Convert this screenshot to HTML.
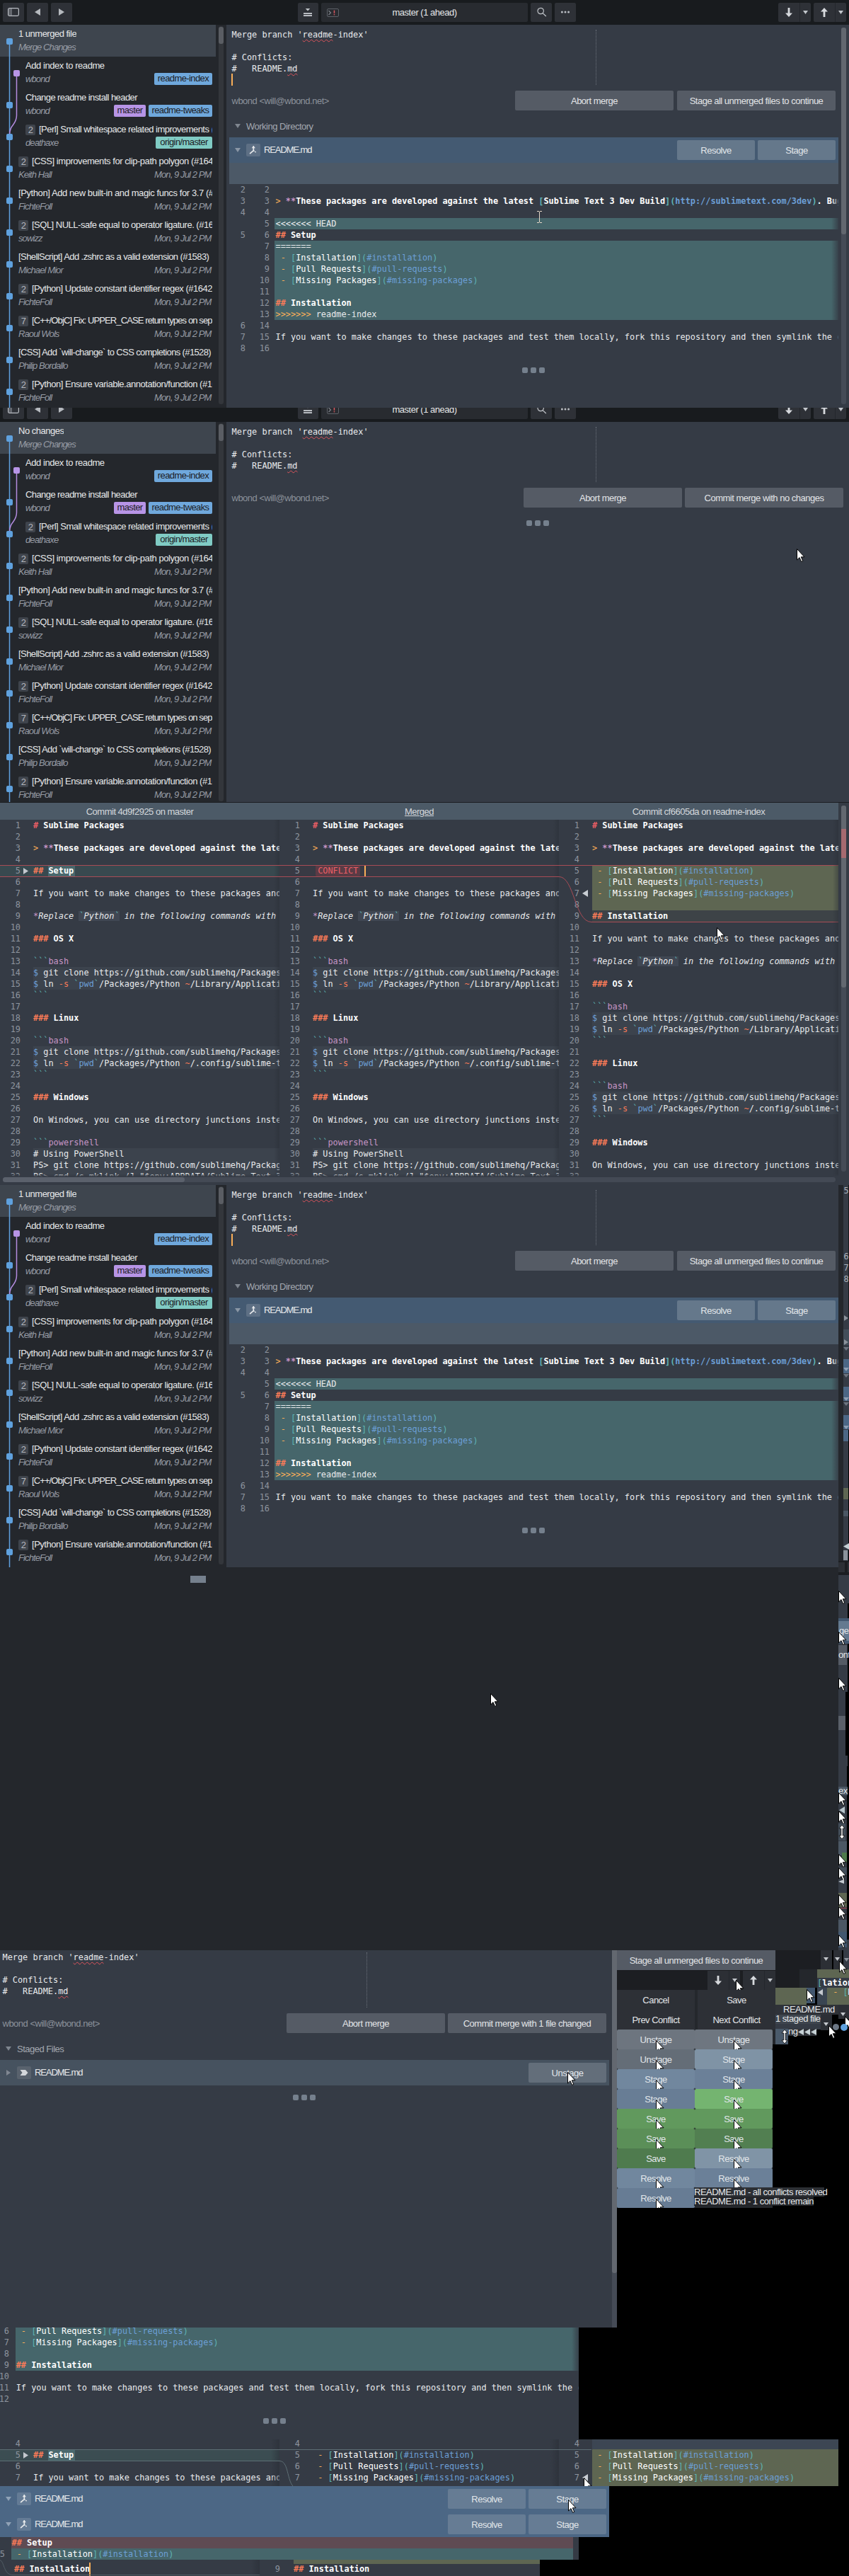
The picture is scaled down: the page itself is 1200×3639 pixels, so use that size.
<!DOCTYPE html><html><head><meta charset="utf-8"><title>Sublime Merge</title><style>
*{box-sizing:border-box;margin:0;padding:0}
html,body{width:1200px;height:3639px;overflow:hidden;background:#24272c}
body{position:relative;font-family:"Liberation Sans",sans-serif;font-size:13px;letter-spacing:-0.5px;color:#e4e6e8}
.a{position:absolute}
.clip{position:absolute;overflow:hidden}
.scr{position:absolute;left:0;width:1200px;height:576px;background:#353b45}
.tb{position:absolute;left:0;top:0;width:1200px;height:35px;background:#181b1e}
.btn{position:absolute;top:4px;height:27px;background:#2e3137;border-radius:2px}
.side{position:absolute;left:0;top:35px;width:316px;height:541px;background:#24272c;overflow:hidden}
.gap{position:absolute;left:316px;top:35px;width:4px;height:541px;background:#24272c}
.row{position:absolute;left:0;width:305px;height:45px}
.row.sel{background:#3e454e}
.t1{position:absolute;top:5px;height:16px;line-height:16px;white-space:nowrap;color:#e6e7e9;overflow:hidden;letter-spacing:-0.5px}
.t2{position:absolute;top:24px;height:16px;line-height:16px;white-space:nowrap;color:#969ba4;font-style:italic;letter-spacing:-0.9px}
.dt{position:absolute;top:24px;right:6.5px;height:16px;line-height:16px;white-space:nowrap;color:#969ba4;font-style:italic;letter-spacing:-0.9px}
.bdg{position:absolute;top:6px;width:14px;height:15px;line-height:15px;text-align:center;background:#3f444c;color:#b4b8be;border-radius:2px;font-size:13px}
.tag{position:absolute;top:23px;height:17px;line-height:16px;padding:0 5px;border-radius:2px;color:#1d2025;white-space:nowrap;font-size:13px;letter-spacing:-0.6px}
.nd{position:absolute;width:9px;height:9px;border-radius:2px}
.mono{font-family:"DejaVu Sans Mono","Liberation Mono",monospace;font-size:11.88px;letter-spacing:0;white-space:pre}
.ln{position:absolute;left:0;height:16px;line-height:16px}
.code{position:absolute;height:16px;line-height:16px;color:#e8eaec}
.num{position:absolute;height:16px;line-height:16px;color:#8e959f;text-align:right}
b{font-weight:bold;color:#fff}
.o{color:#f9ae58}.r{color:#f97b58}.rr{color:#ec5f66}.p{color:#c695c6}.t{color:#5fb4b4}.bl{color:#6c9fd6}.w{color:#fff}
.gbtn{position:absolute;height:28px;line-height:29.5px;text-align:center;background:#555b65;color:#e2e4e7;border-radius:2px;white-space:nowrap;overflow:hidden}
.bbtn{position:absolute;height:28px;line-height:29.5px;overflow:hidden;text-align:center;background:#65788b;color:#e2e6ea;border-radius:2px;white-space:nowrap}
.dot{position:absolute;width:8px;height:8px;border-radius:2px;background:#75808d}
.sq{text-decoration:underline wavy #e0545c;text-decoration-thickness:1px;text-underline-offset:2px}
.hdr{position:absolute;height:24px;line-height:22px;padding-top:2px;text-align:center;color:#d4d8dc;background:#4c5a67;white-space:nowrap}
.cur{position:absolute;width:12px;height:19px}
</style></head><body>
<!--S1-->
<div class="clip" style="left:0;top:0px;width:1200px;height:576px"><div class="scr" style="top:0px"><div class="tb"><div class="btn" style="left:4px;width:30px"><svg class="a" style="left:7px;top:7px" width="16" height="12" viewBox="0 0 16 12"><rect x="1.2" y="1.2" width="4" height="9.6" fill="#5d6168"/><rect x="0.6" y="0.6" width="14.8" height="10.8" rx="1.8" fill="none" stroke="#b9bdc3" stroke-width="1.2"/><path d="M5.2 1V11" stroke="#8d9198" stroke-width="0.8"/></svg></div><div class="btn" style="left:38px;width:30px"><svg class="a" style="left:11px;top:8px" width="8" height="10" viewBox="0 0 8 10"><path d="M8 0V10L0 5Z" fill="#b6babf"/></svg></div><div class="btn" style="left:72px;width:30px"><svg class="a" style="left:11px;top:8px" width="8" height="10" viewBox="0 0 8 10"><path d="M0 0V10L8 5Z" fill="#b6babf"/></svg></div><div class="btn" style="left:421px;width:29px"><svg class="a" style="left:8px;top:7px" width="12" height="13" viewBox="0 0 12 13"><path d="M2.8 0.9H9.2L6 4.6Z" fill="#c0c4c9"/><rect x="0" y="7.1" width="12" height="1.9" fill="#c0c4c9"/><rect x="0" y="10.1" width="12" height="1.9" fill="#c0c4c9"/></svg></div><div class="btn" style="left:454px;width:292px;background:#282b30"><svg class="a" style="left:8px;top:8px" width="17" height="12" viewBox="0 0 17 12"><rect x="0.5" y="0.5" width="16" height="11" rx="1.5" fill="none" stroke="#5d6168"/><path d="M2.5 3L5.5 6L2.5 9" stroke="#80858d" fill="none" stroke-width="1.1"/><rect x="9.7" y="2.6" width="1.5" height="4.2" fill="#d9575f"/><rect x="9.7" y="7.9" width="1.5" height="1.5" fill="#d9575f"/></svg><div class="a" style="left:0;top:0;width:292px;height:27px;line-height:27px;text-align:center;color:#e4e6e8">master (1 ahead)</div></div><div class="btn" style="left:750px;width:30px"><svg class="a" style="left:9px;top:6px" width="14" height="14" viewBox="0 0 14 14"><circle cx="5.2" cy="5.5" r="4.2" fill="none" stroke="#c0c4c9" stroke-width="1.2"/><path d="M8.2 8.6L12.8 13" stroke="#c0c4c9" stroke-width="1.3"/></svg></div><div class="btn" style="left:784px;width:30px"><svg class="a" style="left:8px;top:11px" width="14" height="4" viewBox="0 0 14 4"><circle cx="2.4" cy="1.9" r="1.5" fill="#b9bdc3"/><circle cx="7" cy="1.9" r="1.5" fill="#b9bdc3"/><circle cx="11.6" cy="1.9" r="1.5" fill="#b9bdc3"/></svg></div><div class="btn" style="left:1100px;width:46px"><svg class="a" style="left:10px;top:7px" width="10" height="13" viewBox="0 0 10 13"><path d="M3.6 0H6.4V7.5H10L5 13L0 7.5H3.6Z" fill="#d6d9dd"/></svg><div class="a" style="left:30px;top:0;width:1px;height:27px;background:#24272c"></div><svg class="a" style="left:35px;top:11px" width="7" height="5" viewBox="0 0 7 5"><path d="M0 0H7L3.5 5Z" fill="#c3c7cc"/></svg></div><div class="btn" style="left:1150px;width:46px"><svg class="a" style="left:10px;top:7px" width="10" height="13" viewBox="0 0 10 13"><path d="M3.6 13H6.4V5.5H10L5 0L0 5.5H3.6Z" fill="#d6d9dd"/></svg><div class="a" style="left:30px;top:0;width:1px;height:27px;background:#24272c"></div><svg class="a" style="left:35px;top:11px" width="7" height="5" viewBox="0 0 7 5"><path d="M0 0H7L3.5 5Z" fill="#c3c7cc"/></svg></div></div><div class="side"><div class="row sel" style="top:0"><div class="t1" style="left:26px">1 unmerged file</div><div class="t2" style="left:26px">Merge Changes</div></div><div class="row" style="top:45px"><div class="t1" style="left:36px;width:264px;letter-spacing:-0.44px">Add index to readme</div><div class="t2" style="left:36px">wbond</div><div class="tag" style="left:218px;width:82px;background:#6fa8dc;text-align:center;padding:0">readme-index</div></div><div class="row" style="top:90px"><div class="t1" style="left:36px;width:264px;letter-spacing:-0.58px">Change readme install header</div><div class="t2" style="left:36px">wbond</div><div class="tag" style="left:161px;width:45px;background:#b794e6;text-align:center;padding:0">master</div><div class="tag" style="left:210px;width:90px;background:#6fa8dc;text-align:center;padding:0">readme-tweaks</div></div><div class="row" style="top:135px"><div class="bdg" style="left:36px">2</div><div class="t1" style="left:55px;width:245px;letter-spacing:-0.53px">[Perl] Small whitespace related improvements <span class="bl">(</span></div><div class="t2" style="left:36px">deathaxe</div><div class="tag" style="left:220px;width:80px;background:#80cbc4;text-align:center;padding:0">origin/master</div></div><div class="row" style="top:180px"><div class="bdg" style="left:26px">2</div><div class="t1" style="left:45px;width:255px;letter-spacing:-0.45px">[CSS] improvements for clip-path polygon (#1641)</div><div class="t2" style="left:26px">Keith Hall</div><div class="dt">Mon, 9 Jul 2 PM</div></div><div class="row" style="top:225px"><div class="t1" style="left:26px;width:274px;letter-spacing:-0.41px">[Python] Add new built-in and magic funcs for 3.7 (#1639)</div><div class="t2" style="left:26px">FichteFoll</div><div class="dt">Mon, 9 Jul 2 PM</div></div><div class="row" style="top:270px"><div class="bdg" style="left:26px">2</div><div class="t1" style="left:45px;width:255px;letter-spacing:-0.5px">[SQL] NULL-safe equal to operator ligature. (#1637)</div><div class="t2" style="left:26px">sowizz</div><div class="dt">Mon, 9 Jul 2 PM</div></div><div class="row" style="top:315px"><div class="t1" style="left:26px;width:274px;letter-spacing:-0.577px">[ShellScript] Add .zshrc as a valid extension (#1583)</div><div class="t2" style="left:26px">Michael Mior</div><div class="dt">Mon, 9 Jul 2 PM</div></div><div class="row" style="top:360px"><div class="bdg" style="left:26px">2</div><div class="t1" style="left:45px;width:255px;letter-spacing:-0.5px">[Python] Update constant identifier regex (#1642)</div><div class="t2" style="left:26px">FichteFoll</div><div class="dt">Mon, 9 Jul 2 PM</div></div><div class="row" style="top:405px"><div class="bdg" style="left:26px">7</div><div class="t1" style="left:45px;width:255px;letter-spacing:-0.89px">[C++/ObjC] Fix: UPPER_CASE return types on separate</div><div class="t2" style="left:26px">Raoul Wols</div><div class="dt">Mon, 9 Jul 2 PM</div></div><div class="row" style="top:450px"><div class="t1" style="left:26px;width:274px;letter-spacing:-0.63px">[CSS] Add `will-change` to CSS completions (#1528)</div><div class="t2" style="left:26px">Philip Bordallo</div><div class="dt">Mon, 9 Jul 2 PM</div></div><div class="row" style="top:495px"><div class="bdg" style="left:26px">2</div><div class="t1" style="left:45px;width:255px;letter-spacing:-0.48px">[Python] Ensure variable.annotation/function (#1632)</div><div class="t2" style="left:26px">FichteFoll</div><div class="dt">Mon, 9 Jul 2 PM</div></div><svg class="a" style="left:0;top:0" width="40" height="541" viewBox="0 0 40 541"><path d="M13.5 24V541" stroke="#5fa1de" stroke-width="1.5" fill="none"/><path d="M23.5 69V128C23.5 142 13.5 140 13.5 156" stroke="#b48ce0" stroke-width="1.5" fill="none"/><rect x="9" y="19" width="9" height="9" rx="2" fill="#5fa1de"/><rect x="19" y="64" width="9" height="9" rx="2" fill="#b794e6"/><rect x="9" y="109" width="9" height="9" rx="2" fill="#5fa1de"/><rect x="9" y="154" width="9" height="9" rx="2" fill="#5fa1de"/><rect x="9" y="199" width="9" height="9" rx="2" fill="#5fa1de"/><rect x="9" y="244" width="9" height="9" rx="2" fill="#5fa1de"/><rect x="9" y="289" width="9" height="9" rx="2" fill="#5fa1de"/><rect x="9" y="334" width="9" height="9" rx="2" fill="#5fa1de"/><rect x="9" y="379" width="9" height="9" rx="2" fill="#5fa1de"/><rect x="9" y="424" width="9" height="9" rx="2" fill="#5fa1de"/><rect x="9" y="469" width="9" height="9" rx="2" fill="#5fa1de"/><rect x="9" y="514" width="9" height="9" rx="2" fill="#5fa1de"/></svg><div class="a" style="left:309px;top:2px;width:7px;height:534px;background:#33363b;border-radius:3px"></div><div class="a" style="left:309px;top:3px;width:7px;height:24px;background:#5a5d63;border-radius:3px"></div></div><div class="gap"></div><div class="a mono" style="left:327.5px;top:41px;line-height:16px;color:#e8eaec">Merge branch '<span class="sq">readme</span>-index'

# Conflicts:
#   README.<span class="sq">md</span></div><div class="a" style="left:842px;top:42px;width:0;height:78px;border-left:1px dotted #6a707a"></div><div class="a" style="left:327px;top:104px;width:2px;height:17px;background:#f9ae58"></div><div class="a" style="left:327.5px;top:135px;line-height:16px;color:#8b919a">wbond &lt;will@wbond.net&gt;</div><div class="gbtn" style="left:728px;top:128px;width:224px">Abort merge</div><div class="gbtn" style="left:957px;top:128px;width:224px">Stage all unmerged files to continue</div><svg class="a" style="left:332px;top:175px" width="8" height="6" viewBox="0 0 8 6"><path d="M0 0H8L4 6Z" fill="#7f868f"/></svg><div class="a" style="left:348px;top:171px;line-height:16px;color:#a3a8b0">Working Directory</div><div class="a" style="left:324px;top:194px;width:861px;height:36px;background:#445a72"></div><svg class="a" style="left:332px;top:209px" width="8" height="6" viewBox="0 0 8 6"><path d="M0 0H8L4 6Z" fill="#8a97a6"/></svg><svg class="a" style="left:348px;top:203px" width="20" height="18" viewBox="0 0 20 18"><rect width="20" height="18" rx="2" fill="#5d6f84"/><path d="M10.3 3.8V9.6L5.6 13.6" stroke="#e8eaec" stroke-width="1.7" fill="none" stroke-linecap="round" stroke-linejoin="round"/><path d="M10.3 9.6L14.2 12.6" stroke="#e8eaec" stroke-width="1.5" fill="none" stroke-dasharray="1.6 1"/><path d="M7.7 6.2L10.3 3L12.9 6.2Z" fill="#e8eaec"/></svg><div class="a" style="left:373px;top:204px;line-height:16px;color:#e6e8ea;letter-spacing:-1.1px">README.md</div><div class="bbtn" style="left:957px;top:198px;width:110px">Resolve</div><div class="bbtn" style="left:1071px;top:198px;width:110px">Stage</div><div class="a" style="left:324px;top:230px;width:861px;height:30px;background:#4c5967"></div><div class="clip mono" style="left:324px;top:260px;width:861px;height:240px"><div class="num" style="left:0;width:23px;top:0px">2</div><div class="num" style="left:30px;width:27px;top:0px">2</div><div class="num" style="left:0;width:23px;top:16px">3</div><div class="num" style="left:30px;width:27px;top:16px">3</div><div class="code" style="left:65.5px;top:16px"><span class="o">&gt;</span> <span class="p" style="font-weight:bold">**</span><b>These packages are developed against the latest <span class="t">[</span>Sublime Text 3 Dev Build<span class="t">](</span><span class="bl">http://sublimetext.com/3dev</span><span class="t">)</span>. Bugs should be</b></div><div class="num" style="left:0;width:23px;top:32px">4</div><div class="num" style="left:30px;width:27px;top:32px">4</div><div class="a" style="left:64px;top:48px;width:797px;height:16px;background:#46666b"></div><div class="num" style="left:30px;width:27px;top:48px">5</div><div class="code" style="left:65.5px;top:48px">&lt;&lt;&lt;&lt;&lt;&lt;&lt; HEAD</div><div class="num" style="left:0;width:23px;top:64px">5</div><div class="num" style="left:30px;width:27px;top:64px">6</div><div class="code" style="left:65.5px;top:64px"><span class="r" style="font-weight:bold">##</span> <b>Setup</b></div><div class="a" style="left:64px;top:80px;width:797px;height:16px;background:#46666b"></div><div class="num" style="left:30px;width:27px;top:80px">7</div><div class="code" style="left:65.5px;top:80px">=======</div><div class="a" style="left:64px;top:96px;width:797px;height:16px;background:#46666b"></div><div class="num" style="left:30px;width:27px;top:96px">8</div><div class="code" style="left:65.5px;top:96px"> <span class="o">-</span> <span class="t">[</span><span class="w">Installation</span><span class="t">](</span><span class="bl">#installation</span><span class="t">)</span></div><div class="a" style="left:64px;top:112px;width:797px;height:16px;background:#46666b"></div><div class="num" style="left:30px;width:27px;top:112px">9</div><div class="code" style="left:65.5px;top:112px"> <span class="o">-</span> <span class="t">[</span><span class="w">Pull Requests</span><span class="t">](</span><span class="bl">#pull-requests</span><span class="t">)</span></div><div class="a" style="left:64px;top:128px;width:797px;height:16px;background:#46666b"></div><div class="num" style="left:30px;width:27px;top:128px">10</div><div class="code" style="left:65.5px;top:128px"> <span class="o">-</span> <span class="t">[</span><span class="w">Missing Packages</span><span class="t">](</span><span class="bl">#missing-packages</span><span class="t">)</span></div><div class="a" style="left:64px;top:144px;width:797px;height:16px;background:#46666b"></div><div class="num" style="left:30px;width:27px;top:144px">11</div><div class="a" style="left:64px;top:160px;width:797px;height:16px;background:#46666b"></div><div class="num" style="left:30px;width:27px;top:160px">12</div><div class="code" style="left:65.5px;top:160px"><span class="r" style="font-weight:bold">##</span> <b>Installation</b></div><div class="a" style="left:64px;top:176px;width:797px;height:16px;background:#46666b"></div><div class="num" style="left:30px;width:27px;top:176px">13</div><div class="code" style="left:65.5px;top:176px"><span class="o">&gt;&gt;&gt;&gt;&gt;&gt;&gt;</span> readme-index</div><div class="num" style="left:0;width:23px;top:192px">6</div><div class="num" style="left:30px;width:27px;top:192px">14</div><div class="num" style="left:0;width:23px;top:208px">7</div><div class="num" style="left:30px;width:27px;top:208px">15</div><div class="code" style="left:65.5px;top:208px">If you want to make changes to these packages and test them locally, fork this repository and then symlink the changes</div><div class="num" style="left:0;width:23px;top:224px">8</div><div class="num" style="left:30px;width:27px;top:224px">16</div><div class="a" style="right:0;top:0;width:10px;height:240px;background:linear-gradient(to right,rgba(53,59,69,0),rgba(53,59,69,.85))"></div></div><div class="dot" style="left:738px;top:519px"></div><div class="dot" style="left:750px;top:519px"></div><div class="dot" style="left:762px;top:519px"></div><div class="a" style="left:1189px;top:39px;width:7px;height:532px;background:#454b56;border-radius:3px"></div><div class="a" style="left:1189px;top:39px;width:7px;height:292px;background:#62676f;border-radius:3px"></div></div></div>
<svg class="a" style="left:759px;top:298px" width="7" height="17" viewBox="0 0 7 17"><path d="M0 .5H3M4 .5H7M3.5 1V16M0 16.5H3M4 16.5H7" stroke="#e6d8c8" stroke-width="1" fill="none"/></svg>
<!--S2-->
<div class="clip" style="left:0;top:576px;width:1200px;height:557px"><div class="scr" style="top:-15px"><div class="tb"><div class="btn" style="left:4px;width:30px"><svg class="a" style="left:7px;top:7px" width="16" height="12" viewBox="0 0 16 12"><rect x="1.2" y="1.2" width="4" height="9.6" fill="#5d6168"/><rect x="0.6" y="0.6" width="14.8" height="10.8" rx="1.8" fill="none" stroke="#b9bdc3" stroke-width="1.2"/><path d="M5.2 1V11" stroke="#8d9198" stroke-width="0.8"/></svg></div><div class="btn" style="left:38px;width:30px"><svg class="a" style="left:11px;top:8px" width="8" height="10" viewBox="0 0 8 10"><path d="M8 0V10L0 5Z" fill="#b6babf"/></svg></div><div class="btn" style="left:72px;width:30px"><svg class="a" style="left:11px;top:8px" width="8" height="10" viewBox="0 0 8 10"><path d="M0 0V10L8 5Z" fill="#b6babf"/></svg></div><div class="btn" style="left:421px;width:29px"><svg class="a" style="left:8px;top:7px" width="12" height="13" viewBox="0 0 12 13"><path d="M2.8 0.9H9.2L6 4.6Z" fill="#c0c4c9"/><rect x="0" y="7.1" width="12" height="1.9" fill="#c0c4c9"/><rect x="0" y="10.1" width="12" height="1.9" fill="#c0c4c9"/></svg></div><div class="btn" style="left:454px;width:292px;background:#282b30"><svg class="a" style="left:8px;top:8px" width="17" height="12" viewBox="0 0 17 12"><rect x="0.5" y="0.5" width="16" height="11" rx="1.5" fill="none" stroke="#5d6168"/><path d="M2.5 3L5.5 6L2.5 9" stroke="#80858d" fill="none" stroke-width="1.1"/><rect x="9.7" y="2.6" width="1.5" height="4.2" fill="#d9575f"/><rect x="9.7" y="7.9" width="1.5" height="1.5" fill="#d9575f"/></svg><div class="a" style="left:0;top:0;width:292px;height:27px;line-height:27px;text-align:center;color:#e4e6e8">master (1 ahead)</div></div><div class="btn" style="left:750px;width:30px"><svg class="a" style="left:9px;top:6px" width="14" height="14" viewBox="0 0 14 14"><circle cx="5.2" cy="5.5" r="4.2" fill="none" stroke="#c0c4c9" stroke-width="1.2"/><path d="M8.2 8.6L12.8 13" stroke="#c0c4c9" stroke-width="1.3"/></svg></div><div class="btn" style="left:784px;width:30px"><svg class="a" style="left:8px;top:11px" width="14" height="4" viewBox="0 0 14 4"><circle cx="2.4" cy="1.9" r="1.5" fill="#b9bdc3"/><circle cx="7" cy="1.9" r="1.5" fill="#b9bdc3"/><circle cx="11.6" cy="1.9" r="1.5" fill="#b9bdc3"/></svg></div><div class="btn" style="left:1100px;width:46px"><svg class="a" style="left:10px;top:7px" width="10" height="13" viewBox="0 0 10 13"><path d="M3.6 0H6.4V7.5H10L5 13L0 7.5H3.6Z" fill="#d6d9dd"/></svg><div class="a" style="left:30px;top:0;width:1px;height:27px;background:#24272c"></div><svg class="a" style="left:35px;top:11px" width="7" height="5" viewBox="0 0 7 5"><path d="M0 0H7L3.5 5Z" fill="#c3c7cc"/></svg></div><div class="btn" style="left:1150px;width:46px"><svg class="a" style="left:10px;top:7px" width="10" height="13" viewBox="0 0 10 13"><path d="M3.6 13H6.4V5.5H10L5 0L0 5.5H3.6Z" fill="#d6d9dd"/></svg><div class="a" style="left:30px;top:0;width:1px;height:27px;background:#24272c"></div><svg class="a" style="left:35px;top:11px" width="7" height="5" viewBox="0 0 7 5"><path d="M0 0H7L3.5 5Z" fill="#c3c7cc"/></svg></div></div><div class="side"><div class="row sel" style="top:0"><div class="t1" style="left:26px">No changes</div><div class="t2" style="left:26px">Merge Changes</div></div><div class="row" style="top:45px"><div class="t1" style="left:36px;width:264px;letter-spacing:-0.44px">Add index to readme</div><div class="t2" style="left:36px">wbond</div><div class="tag" style="left:218px;width:82px;background:#6fa8dc;text-align:center;padding:0">readme-index</div></div><div class="row" style="top:90px"><div class="t1" style="left:36px;width:264px;letter-spacing:-0.58px">Change readme install header</div><div class="t2" style="left:36px">wbond</div><div class="tag" style="left:161px;width:45px;background:#b794e6;text-align:center;padding:0">master</div><div class="tag" style="left:210px;width:90px;background:#6fa8dc;text-align:center;padding:0">readme-tweaks</div></div><div class="row" style="top:135px"><div class="bdg" style="left:36px">2</div><div class="t1" style="left:55px;width:245px;letter-spacing:-0.53px">[Perl] Small whitespace related improvements <span class="bl">(</span></div><div class="t2" style="left:36px">deathaxe</div><div class="tag" style="left:220px;width:80px;background:#80cbc4;text-align:center;padding:0">origin/master</div></div><div class="row" style="top:180px"><div class="bdg" style="left:26px">2</div><div class="t1" style="left:45px;width:255px;letter-spacing:-0.45px">[CSS] improvements for clip-path polygon (#1641)</div><div class="t2" style="left:26px">Keith Hall</div><div class="dt">Mon, 9 Jul 2 PM</div></div><div class="row" style="top:225px"><div class="t1" style="left:26px;width:274px;letter-spacing:-0.41px">[Python] Add new built-in and magic funcs for 3.7 (#1639)</div><div class="t2" style="left:26px">FichteFoll</div><div class="dt">Mon, 9 Jul 2 PM</div></div><div class="row" style="top:270px"><div class="bdg" style="left:26px">2</div><div class="t1" style="left:45px;width:255px;letter-spacing:-0.5px">[SQL] NULL-safe equal to operator ligature. (#1637)</div><div class="t2" style="left:26px">sowizz</div><div class="dt">Mon, 9 Jul 2 PM</div></div><div class="row" style="top:315px"><div class="t1" style="left:26px;width:274px;letter-spacing:-0.577px">[ShellScript] Add .zshrc as a valid extension (#1583)</div><div class="t2" style="left:26px">Michael Mior</div><div class="dt">Mon, 9 Jul 2 PM</div></div><div class="row" style="top:360px"><div class="bdg" style="left:26px">2</div><div class="t1" style="left:45px;width:255px;letter-spacing:-0.5px">[Python] Update constant identifier regex (#1642)</div><div class="t2" style="left:26px">FichteFoll</div><div class="dt">Mon, 9 Jul 2 PM</div></div><div class="row" style="top:405px"><div class="bdg" style="left:26px">7</div><div class="t1" style="left:45px;width:255px;letter-spacing:-0.89px">[C++/ObjC] Fix: UPPER_CASE return types on separate</div><div class="t2" style="left:26px">Raoul Wols</div><div class="dt">Mon, 9 Jul 2 PM</div></div><div class="row" style="top:450px"><div class="t1" style="left:26px;width:274px;letter-spacing:-0.63px">[CSS] Add `will-change` to CSS completions (#1528)</div><div class="t2" style="left:26px">Philip Bordallo</div><div class="dt">Mon, 9 Jul 2 PM</div></div><div class="row" style="top:495px"><div class="bdg" style="left:26px">2</div><div class="t1" style="left:45px;width:255px;letter-spacing:-0.48px">[Python] Ensure variable.annotation/function (#1632)</div><div class="t2" style="left:26px">FichteFoll</div><div class="dt">Mon, 9 Jul 2 PM</div></div><svg class="a" style="left:0;top:0" width="40" height="541" viewBox="0 0 40 541"><path d="M13.5 24V541" stroke="#5fa1de" stroke-width="1.5" fill="none"/><path d="M23.5 69V128C23.5 142 13.5 140 13.5 156" stroke="#b48ce0" stroke-width="1.5" fill="none"/><rect x="9" y="19" width="9" height="9" rx="2" fill="#5fa1de"/><rect x="19" y="64" width="9" height="9" rx="2" fill="#b794e6"/><rect x="9" y="109" width="9" height="9" rx="2" fill="#5fa1de"/><rect x="9" y="154" width="9" height="9" rx="2" fill="#5fa1de"/><rect x="9" y="199" width="9" height="9" rx="2" fill="#5fa1de"/><rect x="9" y="244" width="9" height="9" rx="2" fill="#5fa1de"/><rect x="9" y="289" width="9" height="9" rx="2" fill="#5fa1de"/><rect x="9" y="334" width="9" height="9" rx="2" fill="#5fa1de"/><rect x="9" y="379" width="9" height="9" rx="2" fill="#5fa1de"/><rect x="9" y="424" width="9" height="9" rx="2" fill="#5fa1de"/><rect x="9" y="469" width="9" height="9" rx="2" fill="#5fa1de"/><rect x="9" y="514" width="9" height="9" rx="2" fill="#5fa1de"/></svg><div class="a" style="left:309px;top:2px;width:7px;height:534px;background:#33363b;border-radius:3px"></div><div class="a" style="left:309px;top:3px;width:7px;height:24px;background:#5a5d63;border-radius:3px"></div></div><div class="gap"></div><div class="a mono" style="left:327.5px;top:41px;line-height:16px;color:#e8eaec">Merge branch '<span class="sq">readme</span>-index'

# Conflicts:
#   README.<span class="sq">md</span></div><div class="a" style="left:842px;top:42px;width:0;height:78px;border-left:1px dotted #6a707a"></div><div class="a" style="left:327.5px;top:135px;line-height:16px;color:#8b919a">wbond &lt;will@wbond.net&gt;</div><div class="gbtn" style="left:740px;top:128px;width:224px">Abort merge</div><div class="gbtn" style="left:968px;top:128px;width:224px">Commit merge with no changes</div><div class="dot" style="left:744px;top:174px"></div><div class="dot" style="left:756px;top:174px"></div><div class="dot" style="left:768px;top:174px"></div><svg class="cur" style="left:1126px;top:214px" viewBox="0 0 12 19"><path d="M0.5 0.5 L0.5 16 L4 12.6 L6.6 18.4 L8.8 17.4 L6.3 11.8 L11 11.8 Z" fill="#fff" stroke="#000" stroke-width="1"/></svg></div></div>
<div class="a" style="left:0;top:1133px;width:1200px;height:1px;background:#1b1d21"></div>
<!--S3-->
<div class="clip" style="left:0;top:1134px;width:1200px;height:540px;background:#353b45"><div class="hdr" style="left:0;top:0;width:1185px"></div><div class="hdr" style="left:0;top:0;width:395px;background:none">Commit 4d9f2925 on master</div><div class="hdr" style="left:395px;top:0;width:395px;background:none;text-decoration:underline">Merged</div><div class="hdr" style="left:790px;top:0;width:395px;background:none">Commit cf6605da on readme-index</div><div class="clip mono" style="left:0px;top:24px;width:395px;height:516px"><div class="a" style="left:0;top:64px;width:395px;height:16px;background:#38494f"></div><div class="a" style="left:68px;top:64px;width:38px;height:16px;background:#4a686d"></div><svg class="a" style="left:33px;top:68px" width="7" height="9" viewBox="0 0 7 9"><path d="M0 0V9L7 4.5Z" fill="#c3c8ce"/></svg><div class="num" style="left:0;width:29px;top:0px">1</div><div class="code" style="left:47px;top:0px"><span class="rr" style="font-weight:bold">#</span> <b>Sublime Packages</b></div><div class="num" style="left:0;width:29px;top:16px">2</div><div class="num" style="left:0;width:29px;top:32px">3</div><div class="code" style="left:47px;top:32px"><span class="o">&gt;</span> <span class="p" style="font-weight:bold">**</span><b>These packages are developed against the latest <span class="t">[</span>Sublime Text 3 Dev Build<span class="t">](</span><span class="bl">http://sublimetext.com/3dev</span><span class="t">)</span>. Bugs should be</b></div><div class="num" style="left:0;width:29px;top:48px">4</div><div class="num" style="left:0;width:29px;top:64px">5</div><div class="code" style="left:47px;top:64px"><span class="r" style="font-weight:bold">##</span> <b>Setup</b></div><div class="num" style="left:0;width:29px;top:80px">6</div><div class="num" style="left:0;width:29px;top:96px">7</div><div class="code" style="left:47px;top:96px">If you want to make changes to these packages and test them locally, fork this repository and then symlink the changes</div><div class="num" style="left:0;width:29px;top:112px">8</div><div class="num" style="left:0;width:29px;top:128px">9</div><div class="code" style="left:47px;top:128px"><i><span class="p">*</span>Replace <span style="background:#404753"><span class="t">`</span>Python<span class="t">`</span></span> in the following commands with the name</i></div><div class="num" style="left:0;width:29px;top:144px">10</div><div class="num" style="left:0;width:29px;top:160px">11</div><div class="code" style="left:47px;top:160px"><span class="r" style="font-weight:bold">###</span> <b>OS X</b></div><div class="num" style="left:0;width:29px;top:176px">12</div><div class="num" style="left:0;width:29px;top:192px">13</div><div class="code" style="left:47px;top:192px"><span class="t">```</span><span class="p">bash</span></div><div class="a" style="left:47px;top:208px;width:348px;height:16px;background:#3c434d"></div><div class="num" style="left:0;width:29px;top:208px">14</div><div class="code" style="left:47px;top:208px"><span class="bl">$</span> git clone https://github.com/sublimehq/Packages</div><div class="a" style="left:47px;top:224px;width:348px;height:16px;background:#3c434d"></div><div class="num" style="left:0;width:29px;top:224px">15</div><div class="code" style="left:47px;top:224px"><span class="bl">$</span> ln <span class="r">-s</span> <span class="t">`</span><span class="bl">pwd</span><span class="t">`</span>/Packages/Python <span class="r">~</span>/Library/Application\ Support/Sublime</div><div class="num" style="left:0;width:29px;top:240px">16</div><div class="code" style="left:47px;top:240px"><span class="t">```</span><span class="p"></span></div><div class="num" style="left:0;width:29px;top:256px">17</div><div class="num" style="left:0;width:29px;top:272px">18</div><div class="code" style="left:47px;top:272px"><span class="r" style="font-weight:bold">###</span> <b>Linux</b></div><div class="num" style="left:0;width:29px;top:288px">19</div><div class="num" style="left:0;width:29px;top:304px">20</div><div class="code" style="left:47px;top:304px"><span class="t">```</span><span class="p">bash</span></div><div class="a" style="left:47px;top:320px;width:348px;height:16px;background:#3c434d"></div><div class="num" style="left:0;width:29px;top:320px">21</div><div class="code" style="left:47px;top:320px"><span class="bl">$</span> git clone https://github.com/sublimehq/Packages</div><div class="a" style="left:47px;top:336px;width:348px;height:16px;background:#3c434d"></div><div class="num" style="left:0;width:29px;top:336px">22</div><div class="code" style="left:47px;top:336px"><span class="bl">$</span> ln <span class="r">-s</span> <span class="t">`</span><span class="bl">pwd</span><span class="t">`</span>/Packages/Python <span class="r">~</span>/.config/sublime-text-3/Packages</div><div class="num" style="left:0;width:29px;top:352px">23</div><div class="code" style="left:47px;top:352px"><span class="t">```</span><span class="p"></span></div><div class="num" style="left:0;width:29px;top:368px">24</div><div class="num" style="left:0;width:29px;top:384px">25</div><div class="code" style="left:47px;top:384px"><span class="r" style="font-weight:bold">###</span> <b>Windows</b></div><div class="num" style="left:0;width:29px;top:400px">26</div><div class="num" style="left:0;width:29px;top:416px">27</div><div class="code" style="left:47px;top:416px">On Windows, you can use directory junctions instead of symlinks</div><div class="num" style="left:0;width:29px;top:432px">28</div><div class="num" style="left:0;width:29px;top:448px">29</div><div class="code" style="left:47px;top:448px"><span class="t">```</span><span class="p">powershell</span></div><div class="a" style="left:47px;top:464px;width:348px;height:16px;background:#3c434d"></div><div class="num" style="left:0;width:29px;top:464px">30</div><div class="code" style="left:47px;top:464px"># Using PowerShell</div><div class="a" style="left:47px;top:480px;width:348px;height:16px;background:#3c434d"></div><div class="num" style="left:0;width:29px;top:480px">31</div><div class="code" style="left:47px;top:480px">PS&gt; git clone https://github.com/sublimehq/Packages</div><div class="a" style="left:47px;top:496px;width:348px;height:16px;background:#3c434d"></div><div class="num" style="left:0;width:29px;top:496px">32</div><div class="code" style="left:47px;top:496px">PS&gt; cmd /c mklink /J "$env:APPDATA/Sublime Text 3/Packages/Python"</div><div class="a" style="left:47px;top:512px;width:348px;height:16px;background:#3c434d"></div><div class="num" style="left:0;width:29px;top:512px">33</div></div><div class="clip mono" style="left:395px;top:24px;width:395px;height:516px"><div class="a" style="left:0;top:64px;width:395px;height:16px;background:#393a44"></div><div class="a" style="left:119.5px;top:64px;width:2px;height:16px;background:#f9ae58"></div><div class="num" style="left:0;width:29px;top:0px">1</div><div class="code" style="left:47px;top:0px"><span class="rr" style="font-weight:bold">#</span> <b>Sublime Packages</b></div><div class="num" style="left:0;width:29px;top:16px">2</div><div class="num" style="left:0;width:29px;top:32px">3</div><div class="code" style="left:47px;top:32px"><span class="o">&gt;</span> <span class="p" style="font-weight:bold">**</span><b>These packages are developed against the latest <span class="t">[</span>Sublime Text 3 Dev Build<span class="t">](</span><span class="bl">http://sublimetext.com/3dev</span><span class="t">)</span>. Bugs should be</b></div><div class="num" style="left:0;width:29px;top:48px">4</div><div class="num" style="left:0;width:29px;top:64px">5</div><div class="code" style="left:47px;top:64px"> <span class="rr" style="background:#5b3b45;padding:1px 3px;margin:0 -3px;border-radius:2px">CONFLICT</span></div><div class="num" style="left:0;width:29px;top:80px">6</div><div class="num" style="left:0;width:29px;top:96px">7</div><div class="code" style="left:47px;top:96px">If you want to make changes to these packages and test them locally, fork this repository and then symlink the changes</div><div class="num" style="left:0;width:29px;top:112px">8</div><div class="num" style="left:0;width:29px;top:128px">9</div><div class="code" style="left:47px;top:128px"><i><span class="p">*</span>Replace <span style="background:#404753"><span class="t">`</span>Python<span class="t">`</span></span> in the following commands with the name</i></div><div class="num" style="left:0;width:29px;top:144px">10</div><div class="num" style="left:0;width:29px;top:160px">11</div><div class="code" style="left:47px;top:160px"><span class="r" style="font-weight:bold">###</span> <b>OS X</b></div><div class="num" style="left:0;width:29px;top:176px">12</div><div class="num" style="left:0;width:29px;top:192px">13</div><div class="code" style="left:47px;top:192px"><span class="t">```</span><span class="p">bash</span></div><div class="a" style="left:47px;top:208px;width:348px;height:16px;background:#3c434d"></div><div class="num" style="left:0;width:29px;top:208px">14</div><div class="code" style="left:47px;top:208px"><span class="bl">$</span> git clone https://github.com/sublimehq/Packages</div><div class="a" style="left:47px;top:224px;width:348px;height:16px;background:#3c434d"></div><div class="num" style="left:0;width:29px;top:224px">15</div><div class="code" style="left:47px;top:224px"><span class="bl">$</span> ln <span class="r">-s</span> <span class="t">`</span><span class="bl">pwd</span><span class="t">`</span>/Packages/Python <span class="r">~</span>/Library/Application\ Support/Sublime</div><div class="num" style="left:0;width:29px;top:240px">16</div><div class="code" style="left:47px;top:240px"><span class="t">```</span><span class="p"></span></div><div class="num" style="left:0;width:29px;top:256px">17</div><div class="num" style="left:0;width:29px;top:272px">18</div><div class="code" style="left:47px;top:272px"><span class="r" style="font-weight:bold">###</span> <b>Linux</b></div><div class="num" style="left:0;width:29px;top:288px">19</div><div class="num" style="left:0;width:29px;top:304px">20</div><div class="code" style="left:47px;top:304px"><span class="t">```</span><span class="p">bash</span></div><div class="a" style="left:47px;top:320px;width:348px;height:16px;background:#3c434d"></div><div class="num" style="left:0;width:29px;top:320px">21</div><div class="code" style="left:47px;top:320px"><span class="bl">$</span> git clone https://github.com/sublimehq/Packages</div><div class="a" style="left:47px;top:336px;width:348px;height:16px;background:#3c434d"></div><div class="num" style="left:0;width:29px;top:336px">22</div><div class="code" style="left:47px;top:336px"><span class="bl">$</span> ln <span class="r">-s</span> <span class="t">`</span><span class="bl">pwd</span><span class="t">`</span>/Packages/Python <span class="r">~</span>/.config/sublime-text-3/Packages</div><div class="num" style="left:0;width:29px;top:352px">23</div><div class="code" style="left:47px;top:352px"><span class="t">```</span><span class="p"></span></div><div class="num" style="left:0;width:29px;top:368px">24</div><div class="num" style="left:0;width:29px;top:384px">25</div><div class="code" style="left:47px;top:384px"><span class="r" style="font-weight:bold">###</span> <b>Windows</b></div><div class="num" style="left:0;width:29px;top:400px">26</div><div class="num" style="left:0;width:29px;top:416px">27</div><div class="code" style="left:47px;top:416px">On Windows, you can use directory junctions instead of symlinks</div><div class="num" style="left:0;width:29px;top:432px">28</div><div class="num" style="left:0;width:29px;top:448px">29</div><div class="code" style="left:47px;top:448px"><span class="t">```</span><span class="p">powershell</span></div><div class="a" style="left:47px;top:464px;width:348px;height:16px;background:#3c434d"></div><div class="num" style="left:0;width:29px;top:464px">30</div><div class="code" style="left:47px;top:464px"># Using PowerShell</div><div class="a" style="left:47px;top:480px;width:348px;height:16px;background:#3c434d"></div><div class="num" style="left:0;width:29px;top:480px">31</div><div class="code" style="left:47px;top:480px">PS&gt; git clone https://github.com/sublimehq/Packages</div><div class="a" style="left:47px;top:496px;width:348px;height:16px;background:#3c434d"></div><div class="num" style="left:0;width:29px;top:496px">32</div><div class="code" style="left:47px;top:496px">PS&gt; cmd /c mklink /J "$env:APPDATA/Sublime Text 3/Packages/Python"</div><div class="a" style="left:47px;top:512px;width:348px;height:16px;background:#3c434d"></div><div class="num" style="left:0;width:29px;top:512px">33</div></div><div class="clip mono" style="left:790px;top:24px;width:395px;height:516px"><div class="a" style="left:47px;top:64px;width:348px;height:64px;background:#5e6652"></div><div class="a" style="left:47px;top:128px;width:348px;height:16px;background:#3d4347"></div><svg class="a" style="left:33px;top:99px" width="8" height="10" viewBox="0 0 8 10"><path d="M8 0V10L0 5Z" fill="#c9ced4"/></svg><div class="num" style="left:0;width:29px;top:0px">1</div><div class="code" style="left:47px;top:0px"><span class="rr" style="font-weight:bold">#</span> <b>Sublime Packages</b></div><div class="num" style="left:0;width:29px;top:16px">2</div><div class="num" style="left:0;width:29px;top:32px">3</div><div class="code" style="left:47px;top:32px"><span class="o">&gt;</span> <span class="p" style="font-weight:bold">**</span><b>These packages are developed against the latest <span class="t">[</span>Sublime Text 3 Dev Build<span class="t">](</span><span class="bl">http://sublimetext.com/3dev</span><span class="t">)</span>. Bugs should be</b></div><div class="num" style="left:0;width:29px;top:48px">4</div><div class="num" style="left:0;width:29px;top:64px">5</div><div class="code" style="left:47px;top:64px"> <span class="o">-</span> <span class="t">[</span><span class="w">Installation</span><span class="t">](</span><span class="bl">#installation</span><span class="t">)</span></div><div class="num" style="left:0;width:29px;top:80px">6</div><div class="code" style="left:47px;top:80px"> <span class="o">-</span> <span class="t">[</span><span class="w">Pull Requests</span><span class="t">](</span><span class="bl">#pull-requests</span><span class="t">)</span></div><div class="num" style="left:0;width:29px;top:96px">7</div><div class="code" style="left:47px;top:96px"> <span class="o">-</span> <span class="t">[</span><span class="w">Missing Packages</span><span class="t">](</span><span class="bl">#missing-packages</span><span class="t">)</span></div><div class="num" style="left:0;width:29px;top:112px">8</div><div class="num" style="left:0;width:29px;top:128px">9</div><div class="code" style="left:47px;top:128px"><span class="r" style="font-weight:bold">##</span> <b>Installation</b></div><div class="num" style="left:0;width:29px;top:144px">10</div><div class="num" style="left:0;width:29px;top:160px">11</div><div class="code" style="left:47px;top:160px">If you want to make changes to these packages and test them locally, fork this repository and then symlink the changes</div><div class="num" style="left:0;width:29px;top:176px">12</div><div class="num" style="left:0;width:29px;top:192px">13</div><div class="code" style="left:47px;top:192px"><i><span class="p">*</span>Replace <span style="background:#404753"><span class="t">`</span>Python<span class="t">`</span></span> in the following commands with the name</i></div><div class="num" style="left:0;width:29px;top:208px">14</div><div class="num" style="left:0;width:29px;top:224px">15</div><div class="code" style="left:47px;top:224px"><span class="r" style="font-weight:bold">###</span> <b>OS X</b></div><div class="num" style="left:0;width:29px;top:240px">16</div><div class="num" style="left:0;width:29px;top:256px">17</div><div class="code" style="left:47px;top:256px"><span class="t">```</span><span class="p">bash</span></div><div class="a" style="left:47px;top:272px;width:348px;height:16px;background:#3c434d"></div><div class="num" style="left:0;width:29px;top:272px">18</div><div class="code" style="left:47px;top:272px"><span class="bl">$</span> git clone https://github.com/sublimehq/Packages</div><div class="a" style="left:47px;top:288px;width:348px;height:16px;background:#3c434d"></div><div class="num" style="left:0;width:29px;top:288px">19</div><div class="code" style="left:47px;top:288px"><span class="bl">$</span> ln <span class="r">-s</span> <span class="t">`</span><span class="bl">pwd</span><span class="t">`</span>/Packages/Python <span class="r">~</span>/Library/Application\ Support/Sublime</div><div class="num" style="left:0;width:29px;top:304px">20</div><div class="code" style="left:47px;top:304px"><span class="t">```</span><span class="p"></span></div><div class="num" style="left:0;width:29px;top:320px">21</div><div class="num" style="left:0;width:29px;top:336px">22</div><div class="code" style="left:47px;top:336px"><span class="r" style="font-weight:bold">###</span> <b>Linux</b></div><div class="num" style="left:0;width:29px;top:352px">23</div><div class="num" style="left:0;width:29px;top:368px">24</div><div class="code" style="left:47px;top:368px"><span class="t">```</span><span class="p">bash</span></div><div class="a" style="left:47px;top:384px;width:348px;height:16px;background:#3c434d"></div><div class="num" style="left:0;width:29px;top:384px">25</div><div class="code" style="left:47px;top:384px"><span class="bl">$</span> git clone https://github.com/sublimehq/Packages</div><div class="a" style="left:47px;top:400px;width:348px;height:16px;background:#3c434d"></div><div class="num" style="left:0;width:29px;top:400px">26</div><div class="code" style="left:47px;top:400px"><span class="bl">$</span> ln <span class="r">-s</span> <span class="t">`</span><span class="bl">pwd</span><span class="t">`</span>/Packages/Python <span class="r">~</span>/.config/sublime-text-3/Packages</div><div class="num" style="left:0;width:29px;top:416px">27</div><div class="code" style="left:47px;top:416px"><span class="t">```</span><span class="p"></span></div><div class="num" style="left:0;width:29px;top:432px">28</div><div class="num" style="left:0;width:29px;top:448px">29</div><div class="code" style="left:47px;top:448px"><span class="r" style="font-weight:bold">###</span> <b>Windows</b></div><div class="num" style="left:0;width:29px;top:464px">30</div><div class="num" style="left:0;width:29px;top:480px">31</div><div class="code" style="left:47px;top:480px">On Windows, you can use directory junctions instead of symlinks</div><div class="num" style="left:0;width:29px;top:496px">32</div><div class="num" style="left:0;width:29px;top:512px">33</div><div class="code" style="left:47px;top:512px"><span class="t">```</span><span class="p">powershell</span></div></div><div class="a" style="left:387px;top:24px;width:8px;height:516px;background:linear-gradient(to right,rgba(40,45,53,0),rgba(40,45,53,.45))"></div><div class="a" style="left:782px;top:24px;width:8px;height:516px;background:linear-gradient(to right,rgba(40,45,53,0),rgba(40,45,53,.45))"></div><svg class="a" style="left:0;top:0" width="1185" height="540" viewBox="0 0 1185 540"><g stroke="#a84c55" stroke-width="1" fill="none"><path d="M0 88.5H1185"/><path d="M0 104.5H790C812 104.5 812 168.5 836 168.5H1185"/></g></svg><svg class="cur" style="left:1013px;top:176px" viewBox="0 0 12 19"><path d="M0.5 0.5 L0.5 16 L4 12.6 L6.6 18.4 L8.8 17.4 L6.3 11.8 L11 11.8 Z" fill="#fff" stroke="#000" stroke-width="1"/></svg><div class="a" style="left:1177px;top:24px;width:8px;height:516px;background:linear-gradient(to right,rgba(40,45,53,0),rgba(40,45,53,.45))"></div><div class="a" style="left:1185px;top:0;width:15px;height:540px;background:#353b45"></div><div class="a" style="left:1189px;top:4px;width:7px;height:517px;background:#454b56;border-radius:3px"></div><div class="a" style="left:1189px;top:4px;width:7px;height:257px;background:#636870;border-radius:3px"></div><div class="a" style="left:1189px;top:37px;width:7px;height:41px;background:#a66a70"></div><div class="a" style="left:0;top:524px;width:1185px;height:16px;background:linear-gradient(to bottom,rgba(53,59,69,0),rgba(53,59,69,1) 4px)"></div><div class="a" style="left:4px;top:529px;width:1177px;height:7px;background:#444a55;border-radius:3.5px"></div><div class="a" style="left:4px;top:529px;width:257px;height:7px;background:#5b616c;border-radius:3.5px"></div></div>
<!--S4-->
<div class="clip" style="left:0;top:1674px;width:1185px;height:540px"><div class="scr" style="top:-35px"><div class="tb"><div class="btn" style="left:4px;width:30px"><svg class="a" style="left:7px;top:7px" width="16" height="12" viewBox="0 0 16 12"><rect x="1.2" y="1.2" width="4" height="9.6" fill="#5d6168"/><rect x="0.6" y="0.6" width="14.8" height="10.8" rx="1.8" fill="none" stroke="#b9bdc3" stroke-width="1.2"/><path d="M5.2 1V11" stroke="#8d9198" stroke-width="0.8"/></svg></div><div class="btn" style="left:38px;width:30px"><svg class="a" style="left:11px;top:8px" width="8" height="10" viewBox="0 0 8 10"><path d="M8 0V10L0 5Z" fill="#b6babf"/></svg></div><div class="btn" style="left:72px;width:30px"><svg class="a" style="left:11px;top:8px" width="8" height="10" viewBox="0 0 8 10"><path d="M0 0V10L8 5Z" fill="#b6babf"/></svg></div><div class="btn" style="left:421px;width:29px"><svg class="a" style="left:8px;top:7px" width="12" height="13" viewBox="0 0 12 13"><path d="M2.8 0.9H9.2L6 4.6Z" fill="#c0c4c9"/><rect x="0" y="7.1" width="12" height="1.9" fill="#c0c4c9"/><rect x="0" y="10.1" width="12" height="1.9" fill="#c0c4c9"/></svg></div><div class="btn" style="left:454px;width:292px;background:#282b30"><svg class="a" style="left:8px;top:8px" width="17" height="12" viewBox="0 0 17 12"><rect x="0.5" y="0.5" width="16" height="11" rx="1.5" fill="none" stroke="#5d6168"/><path d="M2.5 3L5.5 6L2.5 9" stroke="#80858d" fill="none" stroke-width="1.1"/><rect x="9.7" y="2.6" width="1.5" height="4.2" fill="#d9575f"/><rect x="9.7" y="7.9" width="1.5" height="1.5" fill="#d9575f"/></svg><div class="a" style="left:0;top:0;width:292px;height:27px;line-height:27px;text-align:center;color:#e4e6e8">master (1 ahead)</div></div><div class="btn" style="left:750px;width:30px"><svg class="a" style="left:9px;top:6px" width="14" height="14" viewBox="0 0 14 14"><circle cx="5.2" cy="5.5" r="4.2" fill="none" stroke="#c0c4c9" stroke-width="1.2"/><path d="M8.2 8.6L12.8 13" stroke="#c0c4c9" stroke-width="1.3"/></svg></div><div class="btn" style="left:784px;width:30px"><svg class="a" style="left:8px;top:11px" width="14" height="4" viewBox="0 0 14 4"><circle cx="2.4" cy="1.9" r="1.5" fill="#b9bdc3"/><circle cx="7" cy="1.9" r="1.5" fill="#b9bdc3"/><circle cx="11.6" cy="1.9" r="1.5" fill="#b9bdc3"/></svg></div><div class="btn" style="left:1100px;width:46px"><svg class="a" style="left:10px;top:7px" width="10" height="13" viewBox="0 0 10 13"><path d="M3.6 0H6.4V7.5H10L5 13L0 7.5H3.6Z" fill="#d6d9dd"/></svg><div class="a" style="left:30px;top:0;width:1px;height:27px;background:#24272c"></div><svg class="a" style="left:35px;top:11px" width="7" height="5" viewBox="0 0 7 5"><path d="M0 0H7L3.5 5Z" fill="#c3c7cc"/></svg></div><div class="btn" style="left:1150px;width:46px"><svg class="a" style="left:10px;top:7px" width="10" height="13" viewBox="0 0 10 13"><path d="M3.6 13H6.4V5.5H10L5 0L0 5.5H3.6Z" fill="#d6d9dd"/></svg><div class="a" style="left:30px;top:0;width:1px;height:27px;background:#24272c"></div><svg class="a" style="left:35px;top:11px" width="7" height="5" viewBox="0 0 7 5"><path d="M0 0H7L3.5 5Z" fill="#c3c7cc"/></svg></div></div><div class="side"><div class="row sel" style="top:0"><div class="t1" style="left:26px">1 unmerged file</div><div class="t2" style="left:26px">Merge Changes</div></div><div class="row" style="top:45px"><div class="t1" style="left:36px;width:264px;letter-spacing:-0.44px">Add index to readme</div><div class="t2" style="left:36px">wbond</div><div class="tag" style="left:218px;width:82px;background:#6fa8dc;text-align:center;padding:0">readme-index</div></div><div class="row" style="top:90px"><div class="t1" style="left:36px;width:264px;letter-spacing:-0.58px">Change readme install header</div><div class="t2" style="left:36px">wbond</div><div class="tag" style="left:161px;width:45px;background:#b794e6;text-align:center;padding:0">master</div><div class="tag" style="left:210px;width:90px;background:#6fa8dc;text-align:center;padding:0">readme-tweaks</div></div><div class="row" style="top:135px"><div class="bdg" style="left:36px">2</div><div class="t1" style="left:55px;width:245px;letter-spacing:-0.53px">[Perl] Small whitespace related improvements <span class="bl">(</span></div><div class="t2" style="left:36px">deathaxe</div><div class="tag" style="left:220px;width:80px;background:#80cbc4;text-align:center;padding:0">origin/master</div></div><div class="row" style="top:180px"><div class="bdg" style="left:26px">2</div><div class="t1" style="left:45px;width:255px;letter-spacing:-0.45px">[CSS] improvements for clip-path polygon (#1641)</div><div class="t2" style="left:26px">Keith Hall</div><div class="dt">Mon, 9 Jul 2 PM</div></div><div class="row" style="top:225px"><div class="t1" style="left:26px;width:274px;letter-spacing:-0.41px">[Python] Add new built-in and magic funcs for 3.7 (#1639)</div><div class="t2" style="left:26px">FichteFoll</div><div class="dt">Mon, 9 Jul 2 PM</div></div><div class="row" style="top:270px"><div class="bdg" style="left:26px">2</div><div class="t1" style="left:45px;width:255px;letter-spacing:-0.5px">[SQL] NULL-safe equal to operator ligature. (#1637)</div><div class="t2" style="left:26px">sowizz</div><div class="dt">Mon, 9 Jul 2 PM</div></div><div class="row" style="top:315px"><div class="t1" style="left:26px;width:274px;letter-spacing:-0.577px">[ShellScript] Add .zshrc as a valid extension (#1583)</div><div class="t2" style="left:26px">Michael Mior</div><div class="dt">Mon, 9 Jul 2 PM</div></div><div class="row" style="top:360px"><div class="bdg" style="left:26px">2</div><div class="t1" style="left:45px;width:255px;letter-spacing:-0.5px">[Python] Update constant identifier regex (#1642)</div><div class="t2" style="left:26px">FichteFoll</div><div class="dt">Mon, 9 Jul 2 PM</div></div><div class="row" style="top:405px"><div class="bdg" style="left:26px">7</div><div class="t1" style="left:45px;width:255px;letter-spacing:-0.89px">[C++/ObjC] Fix: UPPER_CASE return types on separate</div><div class="t2" style="left:26px">Raoul Wols</div><div class="dt">Mon, 9 Jul 2 PM</div></div><div class="row" style="top:450px"><div class="t1" style="left:26px;width:274px;letter-spacing:-0.63px">[CSS] Add `will-change` to CSS completions (#1528)</div><div class="t2" style="left:26px">Philip Bordallo</div><div class="dt">Mon, 9 Jul 2 PM</div></div><div class="row" style="top:495px"><div class="bdg" style="left:26px">2</div><div class="t1" style="left:45px;width:255px;letter-spacing:-0.48px">[Python] Ensure variable.annotation/function (#1632)</div><div class="t2" style="left:26px">FichteFoll</div><div class="dt">Mon, 9 Jul 2 PM</div></div><svg class="a" style="left:0;top:0" width="40" height="541" viewBox="0 0 40 541"><path d="M13.5 24V541" stroke="#5fa1de" stroke-width="1.5" fill="none"/><path d="M23.5 69V128C23.5 142 13.5 140 13.5 156" stroke="#b48ce0" stroke-width="1.5" fill="none"/><rect x="9" y="19" width="9" height="9" rx="2" fill="#5fa1de"/><rect x="19" y="64" width="9" height="9" rx="2" fill="#b794e6"/><rect x="9" y="109" width="9" height="9" rx="2" fill="#5fa1de"/><rect x="9" y="154" width="9" height="9" rx="2" fill="#5fa1de"/><rect x="9" y="199" width="9" height="9" rx="2" fill="#5fa1de"/><rect x="9" y="244" width="9" height="9" rx="2" fill="#5fa1de"/><rect x="9" y="289" width="9" height="9" rx="2" fill="#5fa1de"/><rect x="9" y="334" width="9" height="9" rx="2" fill="#5fa1de"/><rect x="9" y="379" width="9" height="9" rx="2" fill="#5fa1de"/><rect x="9" y="424" width="9" height="9" rx="2" fill="#5fa1de"/><rect x="9" y="469" width="9" height="9" rx="2" fill="#5fa1de"/><rect x="9" y="514" width="9" height="9" rx="2" fill="#5fa1de"/></svg><div class="a" style="left:309px;top:2px;width:7px;height:534px;background:#33363b;border-radius:3px"></div><div class="a" style="left:309px;top:3px;width:7px;height:24px;background:#5a5d63;border-radius:3px"></div></div><div class="gap"></div><div class="a mono" style="left:327.5px;top:41px;line-height:16px;color:#e8eaec">Merge branch '<span class="sq">readme</span>-index'

# Conflicts:
#   README.<span class="sq">md</span></div><div class="a" style="left:842px;top:42px;width:0;height:78px;border-left:1px dotted #6a707a"></div><div class="a" style="left:327px;top:104px;width:2px;height:17px;background:#f9ae58"></div><div class="a" style="left:327.5px;top:135px;line-height:16px;color:#8b919a">wbond &lt;will@wbond.net&gt;</div><div class="gbtn" style="left:728px;top:128px;width:224px">Abort merge</div><div class="gbtn" style="left:957px;top:128px;width:224px">Stage all unmerged files to continue</div><svg class="a" style="left:332px;top:175px" width="8" height="6" viewBox="0 0 8 6"><path d="M0 0H8L4 6Z" fill="#7f868f"/></svg><div class="a" style="left:348px;top:171px;line-height:16px;color:#a3a8b0">Working Directory</div><div class="a" style="left:324px;top:194px;width:861px;height:36px;background:#445a72"></div><svg class="a" style="left:332px;top:209px" width="8" height="6" viewBox="0 0 8 6"><path d="M0 0H8L4 6Z" fill="#8a97a6"/></svg><svg class="a" style="left:348px;top:203px" width="20" height="18" viewBox="0 0 20 18"><rect width="20" height="18" rx="2" fill="#5d6f84"/><path d="M10.3 3.8V9.6L5.6 13.6" stroke="#e8eaec" stroke-width="1.7" fill="none" stroke-linecap="round" stroke-linejoin="round"/><path d="M10.3 9.6L14.2 12.6" stroke="#e8eaec" stroke-width="1.5" fill="none" stroke-dasharray="1.6 1"/><path d="M7.7 6.2L10.3 3L12.9 6.2Z" fill="#e8eaec"/></svg><div class="a" style="left:373px;top:204px;line-height:16px;color:#e6e8ea;letter-spacing:-1.1px">README.md</div><div class="bbtn" style="left:957px;top:198px;width:110px">Resolve</div><div class="bbtn" style="left:1071px;top:198px;width:110px">Stage</div><div class="a" style="left:324px;top:230px;width:861px;height:30px;background:#4c5967"></div><div class="clip mono" style="left:324px;top:260px;width:861px;height:240px"><div class="num" style="left:0;width:23px;top:0px">2</div><div class="num" style="left:30px;width:27px;top:0px">2</div><div class="num" style="left:0;width:23px;top:16px">3</div><div class="num" style="left:30px;width:27px;top:16px">3</div><div class="code" style="left:65.5px;top:16px"><span class="o">&gt;</span> <span class="p" style="font-weight:bold">**</span><b>These packages are developed against the latest <span class="t">[</span>Sublime Text 3 Dev Build<span class="t">](</span><span class="bl">http://sublimetext.com/3dev</span><span class="t">)</span>. Bugs should be</b></div><div class="num" style="left:0;width:23px;top:32px">4</div><div class="num" style="left:30px;width:27px;top:32px">4</div><div class="a" style="left:64px;top:48px;width:797px;height:16px;background:#46666b"></div><div class="num" style="left:30px;width:27px;top:48px">5</div><div class="code" style="left:65.5px;top:48px">&lt;&lt;&lt;&lt;&lt;&lt;&lt; HEAD</div><div class="num" style="left:0;width:23px;top:64px">5</div><div class="num" style="left:30px;width:27px;top:64px">6</div><div class="code" style="left:65.5px;top:64px"><span class="r" style="font-weight:bold">##</span> <b>Setup</b></div><div class="a" style="left:64px;top:80px;width:797px;height:16px;background:#46666b"></div><div class="num" style="left:30px;width:27px;top:80px">7</div><div class="code" style="left:65.5px;top:80px">=======</div><div class="a" style="left:64px;top:96px;width:797px;height:16px;background:#46666b"></div><div class="num" style="left:30px;width:27px;top:96px">8</div><div class="code" style="left:65.5px;top:96px"> <span class="o">-</span> <span class="t">[</span><span class="w">Installation</span><span class="t">](</span><span class="bl">#installation</span><span class="t">)</span></div><div class="a" style="left:64px;top:112px;width:797px;height:16px;background:#46666b"></div><div class="num" style="left:30px;width:27px;top:112px">9</div><div class="code" style="left:65.5px;top:112px"> <span class="o">-</span> <span class="t">[</span><span class="w">Pull Requests</span><span class="t">](</span><span class="bl">#pull-requests</span><span class="t">)</span></div><div class="a" style="left:64px;top:128px;width:797px;height:16px;background:#46666b"></div><div class="num" style="left:30px;width:27px;top:128px">10</div><div class="code" style="left:65.5px;top:128px"> <span class="o">-</span> <span class="t">[</span><span class="w">Missing Packages</span><span class="t">](</span><span class="bl">#missing-packages</span><span class="t">)</span></div><div class="a" style="left:64px;top:144px;width:797px;height:16px;background:#46666b"></div><div class="num" style="left:30px;width:27px;top:144px">11</div><div class="a" style="left:64px;top:160px;width:797px;height:16px;background:#46666b"></div><div class="num" style="left:30px;width:27px;top:160px">12</div><div class="code" style="left:65.5px;top:160px"><span class="r" style="font-weight:bold">##</span> <b>Installation</b></div><div class="a" style="left:64px;top:176px;width:797px;height:16px;background:#46666b"></div><div class="num" style="left:30px;width:27px;top:176px">13</div><div class="code" style="left:65.5px;top:176px"><span class="o">&gt;&gt;&gt;&gt;&gt;&gt;&gt;</span> readme-index</div><div class="num" style="left:0;width:23px;top:192px">6</div><div class="num" style="left:30px;width:27px;top:192px">14</div><div class="num" style="left:0;width:23px;top:208px">7</div><div class="num" style="left:30px;width:27px;top:208px">15</div><div class="code" style="left:65.5px;top:208px">If you want to make changes to these packages and test them locally, fork this repository and then symlink the changes</div><div class="num" style="left:0;width:23px;top:224px">8</div><div class="num" style="left:30px;width:27px;top:224px">16</div><div class="a" style="right:0;top:0;width:10px;height:240px;background:linear-gradient(to right,rgba(53,59,69,0),rgba(53,59,69,.85))"></div></div><div class="dot" style="left:738px;top:519px"></div><div class="dot" style="left:750px;top:519px"></div><div class="dot" style="left:762px;top:519px"></div><div class="a" style="left:1189px;top:39px;width:7px;height:532px;background:#454b56;border-radius:3px"></div><div class="a" style="left:1189px;top:39px;width:7px;height:292px;background:#62676f;border-radius:3px"></div></div></div>
<!--BOTTOM-->
<div class="a" style="left:269px;top:2226px;width:22px;height:10px;background:#75808d;"></div><svg class="cur" style="left:693px;top:2392px" viewBox="0 0 12 19"><path d="M0.5 0.5 L0.5 16 L4 12.6 L6.6 18.4 L8.8 17.4 L6.3 11.8 L11 11.8 Z" fill="#fff" stroke="#000" stroke-width="1"/></svg><div class="a" style="left:1185px;top:1674px;width:7px;height:531px;background:#24272c;"></div><div class="a" style="left:1192px;top:1674px;width:8px;height:531px;background:#353b45;"></div><div class="a" style="left:1199px;top:1674px;width:1px;height:190px;background:#15171a;"></div><div class="a mono" style="left:1192.5px;top:1674px;line-height:16px;color:#aeb4bc">5</div><div class="a mono" style="left:1192.5px;top:1767px;line-height:16px;color:#aeb4bc">6</div><div class="a mono" style="left:1192.5px;top:1783px;line-height:16px;color:#aeb4bc">7</div><div class="a mono" style="left:1192.5px;top:1799px;line-height:16px;color:#aeb4bc">8</div><svg class="a" style="left:1193px;top:1858px" width="6" height="8" viewBox="0 0 6 8"><path d="M0 0V8L6 4Z" fill="#8b929b"/></svg><div class="a" style="left:1192px;top:1878px;width:8px;height:22px;background:#434e5a;"></div><svg class="a" style="left:1193px;top:1892px" width="6" height="8" viewBox="0 0 6 8"><path d="M0 0V8L6 4Z" fill="#8b929b"/></svg><svg class="a" style="left:1192px;top:1903px" width="8" height="5" viewBox="0 0 8 5"><path d="M0 0H8L4 5Z" fill="#6d7580"/></svg><div class="a" style="left:1192px;top:1920px;width:8px;height:20px;background:#4c6785;"></div><svg class="a" style="left:1192px;top:1932px" width="8" height="5" viewBox="0 0 8 5"><path d="M0 0H8L4 5Z" fill="#8fa0b3"/></svg><svg class="a" style="left:1192px;top:1941px" width="8" height="5" viewBox="0 0 8 5"><path d="M0 0H8L4 5Z" fill="#6d7580"/></svg><div class="a" style="left:1192px;top:1959px;width:8px;height:20px;background:#4c6785;"></div><svg class="a" style="left:1192px;top:1974px" width="8" height="5" viewBox="0 0 8 5"><path d="M0 0H8L4 5Z" fill="#8fa0b3"/></svg><svg class="a" style="left:1192px;top:1981px" width="8" height="5" viewBox="0 0 8 5"><path d="M0 0H8L4 5Z" fill="#6d7580"/></svg><div class="a" style="left:1192px;top:1999px;width:8px;height:20px;background:#4c6785;"></div><svg class="a" style="left:1192px;top:2014px" width="8" height="5" viewBox="0 0 8 5"><path d="M0 0H8L4 5Z" fill="#8fa0b3"/></svg><div class="a" style="left:1199px;top:2020px;width:1px;height:185px;background:#000;"></div><div class="a" style="left:1192px;top:2020px;width:7px;height:16px;background:#4c6785;"></div><div class="a" style="left:1192px;top:2102px;width:7px;height:16px;background:#5e6652;"></div><div class="a" style="left:1192px;top:2134px;width:7px;height:8px;background:#4b5764;"></div><svg class="a" style="left:1192px;top:2180px" width="8" height="9" viewBox="0 0 8 9"><path d="M8 0V9L0 4.5Z" fill="#c5d0d4"/></svg><div class="a" style="left:1192px;top:2190px;width:6px;height:14px;background:#8b929b;"></div><div class="a" style="left:1185px;top:2205px;width:15px;height:20px;background:#1c1e22;"></div><div class="a" style="left:1185px;top:2207px;width:9px;height:14px;background:#2c2f35;"></div><div class="a" style="left:1198px;top:2207px;width:2px;height:14px;background:#2c2f35;"></div><div class="a" style="left:1185px;top:2225px;width:15px;height:530px;background:#353b45;"></div><div class="a" style="left:1198px;top:2265px;width:2px;height:475px;background:#000;"></div><div class="a" style="left:1195px;top:2390px;width:5px;height:90px;background:#000;"></div><div class="a" style="left:1197px;top:2495px;width:3px;height:245px;background:#000;"></div><svg class="cur" style="left:1185px;top:2247px" viewBox="0 0 12 19"><path d="M0.5 0.5 L0.5 16 L4 12.6 L6.6 18.4 L8.8 17.4 L6.3 11.8 L11 11.8 Z" fill="#fff" stroke="#000" stroke-width="1"/></svg><div class="a" style="left:1185px;top:2286px;width:15px;height:36px;background:#42576f;"></div><div class="a" style="left:1185px;top:2290px;width:15px;height:28px;background:#647a90;"></div><div class="a" style="left:1186px;top:2296px;line-height:16px;color:#e2e6ea">ge</div><svg class="cur" style="left:1185px;top:2305px" viewBox="0 0 12 19"><path d="M0.5 0.5 L0.5 16 L4 12.6 L6.6 18.4 L8.8 17.4 L6.3 11.8 L11 11.8 Z" fill="#fff" stroke="#000" stroke-width="1"/></svg><div class="a" style="left:1185px;top:2324px;width:12px;height:28px;background:#555b65;"></div><div class="a" style="left:1185px;top:2330px;line-height:16px;color:#e2e6ea">ont</div><svg class="cur" style="left:1185px;top:2370px" viewBox="0 0 12 19"><path d="M0.5 0.5 L0.5 16 L4 12.6 L6.6 18.4 L8.8 17.4 L6.3 11.8 L11 11.8 Z" fill="#fff" stroke="#000" stroke-width="1"/></svg><div class="a" style="left:1185px;top:2424px;width:10px;height:20px;background:#5a6069;"></div><div class="a" style="left:1185px;top:2524px;width:13px;height:12px;background:#4b5764;"></div><div class="a" style="left:1185px;top:2522px;line-height:16px;color:#e2e6ea">ex</div><svg class="cur" style="left:1185px;top:2532px" viewBox="0 0 12 19"><path d="M0.5 0.5 L0.5 16 L4 12.6 L6.6 18.4 L8.8 17.4 L6.3 11.8 L11 11.8 Z" fill="#fff" stroke="#000" stroke-width="1"/></svg><svg class="a" style="left:1186px;top:2552px" width="8" height="10" viewBox="0 0 8 10"><path d="M8 0V10L0 5Z" fill="#b8c6cc"/></svg><svg class="cur" style="left:1185px;top:2558px" viewBox="0 0 12 19"><path d="M0.5 0.5 L0.5 16 L4 12.6 L6.6 18.4 L8.8 17.4 L6.3 11.8 L11 11.8 Z" fill="#fff" stroke="#000" stroke-width="1"/></svg><div class="a" style="left:1185px;top:2576px;width:10px;height:24px;background:#434e5a;"></div><svg class="a" style="left:1185px;top:2577px" width="10" height="22" viewBox="0 0 10 22"><path d="M5 1L9 6H6.2V16H9L5 21L1 16H3.8V6H1Z" fill="#fff" stroke="#000" stroke-width=".8"/></svg><div class="a" style="left:1185px;top:2601px;width:12px;height:20px;background:#4b5764;"></div><div class="a" style="left:1190px;top:2617px;width:7px;height:14px;background:#4e7a4c;"></div><svg class="cur" style="left:1185px;top:2619px" viewBox="0 0 12 19"><path d="M0.5 0.5 L0.5 16 L4 12.6 L6.6 18.4 L8.8 17.4 L6.3 11.8 L11 11.8 Z" fill="#fff" stroke="#000" stroke-width="1"/></svg><div class="a" style="left:1185px;top:2638px;width:12px;height:12px;background:#434e5a;"></div><svg class="cur" style="left:1185px;top:2638px" viewBox="0 0 12 19"><path d="M0.5 0.5 L0.5 16 L4 12.6 L6.6 18.4 L8.8 17.4 L6.3 11.8 L11 11.8 Z" fill="#fff" stroke="#000" stroke-width="1"/></svg><svg class="a" style="left:1185px;top:2655px" width="8" height="6" viewBox="0 0 8 6"><path d="M8 0V6L0 3Z" fill="#c5cad0"/></svg><div class="a" style="left:1185px;top:2674px;width:12px;height:20px;background:#5e6652;"></div><svg class="cur" style="left:1185px;top:2676px" viewBox="0 0 12 19"><path d="M0.5 0.5 L0.5 16 L4 12.6 L6.6 18.4 L8.8 17.4 L6.3 11.8 L11 11.8 Z" fill="#fff" stroke="#000" stroke-width="1"/></svg><div class="a" style="left:1185px;top:2695px;width:12px;height:1px;background:#a84c55;"></div><svg class="cur" style="left:1185px;top:2693px" viewBox="0 0 12 19"><path d="M0.5 0.5 L0.5 16 L4 12.6 L6.6 18.4 L8.8 17.4 L6.3 11.8 L11 11.8 Z" fill="#fff" stroke="#000" stroke-width="1"/></svg><div class="a" style="left:1185px;top:2712px;width:12px;height:18px;background:#4b5764;"></div><div class="a" style="left:1185px;top:2729px;width:12px;height:22px;background:#42576f;"></div><svg class="cur" style="left:1185px;top:2733px" viewBox="0 0 12 19"><path d="M0.5 0.5 L0.5 16 L4 12.6 L6.6 18.4 L8.8 17.4 L6.3 11.8 L11 11.8 Z" fill="#fff" stroke="#000" stroke-width="1"/></svg><div class="clip" style="left:0;top:2755px;width:872px;height:533px;background:#353b45"><div class="a" style="left:-324px;top:-39px;width:1200px;height:576px"><div class="a mono" style="left:327.5px;top:41px;line-height:16px;color:#e8eaec">Merge branch '<span class="sq">readme</span>-index'

# Conflicts:
#   README.<span class="sq">md</span></div><div class="a" style="left:842px;top:42px;width:0;height:78px;border-left:1px dotted #6a707a"></div><div class="a" style="left:327.5px;top:135px;line-height:16px;color:#8b919a">wbond &lt;will@wbond.net&gt;</div><div class="gbtn" style="left:729px;top:128px;width:224px">Abort merge</div><div class="gbtn" style="left:957px;top:128px;width:224px">Commit merge with 1 file changed</div><svg class="a" style="left:332px;top:175px" width="8" height="6" viewBox="0 0 8 6"><path d="M0 0H8L4 6Z" fill="#7f868f"/></svg><div class="a" style="left:348px;top:171px;line-height:16px;color:#a3a8b0">Staged Files</div><div class="a" style="left:324px;top:194px;width:861px;height:36px;background:#46525f;"></div><svg class="a" style="left:333px;top:208px" width="6" height="8" viewBox="0 0 6 8"><path d="M0 0V8L6 4Z" fill="#808792"/></svg><svg class="a" style="left:348px;top:203px" width="20" height="18" viewBox="0 0 20 18"><rect width="20" height="18" rx="2" fill="#59626d"/><path d="M4.5 5H12L15.5 9L12 13H4.5L7.5 9Z" fill="#d4d7db"/></svg><div class="a" style="left:373px;top:204px;line-height:16px;color:#e6e8ea;letter-spacing:-1.1px">README.md</div><div class="bbtn" style="left:1071px;top:198px;width:110px;background:#636e7a">Unstage</div><svg class="cur" style="left:1126px;top:211px" viewBox="0 0 12 19"><path d="M0.5 0.5 L0.5 16 L4 12.6 L6.6 18.4 L8.8 17.4 L6.3 11.8 L11 11.8 Z" fill="#fff" stroke="#000" stroke-width="1"/></svg><div class="dot" style="left:738px;top:243px"></div><div class="dot" style="left:750px;top:243px"></div><div class="dot" style="left:762px;top:243px"></div><div class="a" style="left:1189px;top:39px;width:7px;height:533px;background:#454b56;"></div><div class="a" style="left:1189px;top:39px;width:7px;height:456px;background:#636870;border-radius:0 0 3px 3px"></div></div></div><div class="a" style="left:1092px;top:2888px;width:108px;height:558px;background:#000;"></div><div class="a" style="left:872px;top:3119px;width:328px;height:327px;background:#000;"></div><div class="a" style="left:818px;top:3288px;width:382px;height:158px;background:#000;"></div><div class="a" style="left:861px;top:3512px;width:339px;height:127px;background:#000;"></div><div class="a" style="left:1185px;top:3446px;width:15px;height:66px;background:#000;"></div><div class="a" style="left:810px;top:3584px;width:60px;height:55px;background:#000;"></div><div class="a" style="left:763px;top:3616px;width:60px;height:23px;background:#000;"></div><div class="gbtn" style="left:872px;top:2755px;width:224px;border-radius:0">Stage all unmerged files to continue</div><div class="a" style="left:872px;top:2783px;width:224px;height:28px;background:#1c1e22;"></div><div class="a" style="left:1000px;top:2784px;width:46px;height:27px;background:#2c2f35;"></div><div class="a" style="left:1030px;top:2784px;width:1px;height:27px;background:#24272c;"></div><svg class="a" style="left:1010px;top:2791px" width="10" height="13" viewBox="0 0 10 13"><path d="M3.6 0H6.4V7.5H10L5 13L0 7.5H3.6Z" fill="#d6d9dd"/></svg><svg class="a" style="left:1035px;top:2795px" width="7" height="5" viewBox="0 0 7 5"><path d="M0 0H7L3.5 5Z" fill="#c3c7cc"/></svg><div class="a" style="left:1050px;top:2784px;width:46px;height:27px;background:#2c2f35;"></div><div class="a" style="left:1080px;top:2784px;width:1px;height:27px;background:#24272c;"></div><svg class="a" style="left:1060px;top:2791px" width="10" height="13" viewBox="0 0 10 13"><path d="M3.6 13H6.4V5.5H10L5 0L0 5.5H3.6Z" fill="#d6d9dd"/></svg><svg class="a" style="left:1085px;top:2795px" width="7" height="5" viewBox="0 0 7 5"><path d="M0 0H7L3.5 5Z" fill="#c3c7cc"/></svg><svg class="cur" style="left:1040px;top:2797px" viewBox="0 0 12 19"><path d="M0.5 0.5 L0.5 16 L4 12.6 L6.6 18.4 L8.8 17.4 L6.3 11.8 L11 11.8 Z" fill="#fff" stroke="#000" stroke-width="1"/></svg><div class="a" style="left:872px;top:2811px;width:224px;height:56px;background:#24272c;"></div><div class="a" style="left:872px;top:2811px;width:110px;height:56px;background:#2d3036;"></div><div class="a" style="left:872px;top:2811px;width:110px;height:28px;line-height:29.5px;text-align:center;color:#e2e4e7">Cancel</div><div class="a" style="left:872px;top:2839px;width:110px;height:28px;line-height:29.5px;text-align:center;color:#e2e4e7">Prev Conflict</div><div class="a" style="left:986px;top:2811px;width:110px;height:56px;background:#2d3036;"></div><div class="a" style="left:986px;top:2811px;width:110px;height:28px;line-height:29.5px;text-align:center;color:#e2e4e7">Save</div><div class="a" style="left:986px;top:2839px;width:110px;height:28px;line-height:29.5px;text-align:center;color:#e2e4e7">Next Conflict</div><div class="clip" style="left:872px;top:2867px;width:110px;height:28px;line-height:29.5px;text-align:center;background:#6d757f;color:#e2e6ea;border-radius:2px">Unstage<svg class="cur" style="left:55px;top:15px" viewBox="0 0 12 19"><path d="M0.5 0.5 L0.5 16 L4 12.6 L6.6 18.4 L8.8 17.4 L6.3 11.8 L11 11.8 Z" fill="#fff" stroke="#000" stroke-width="1"/></svg></div><div class="clip" style="left:982px;top:2867px;width:110px;height:28px;line-height:29.5px;text-align:center;background:#6e7680;color:#e2e6ea;border-radius:2px">Unstage<svg class="cur" style="left:55px;top:15px" viewBox="0 0 12 19"><path d="M0.5 0.5 L0.5 16 L4 12.6 L6.6 18.4 L8.8 17.4 L6.3 11.8 L11 11.8 Z" fill="#fff" stroke="#000" stroke-width="1"/></svg></div><div class="clip" style="left:872px;top:2895px;width:110px;height:28px;line-height:29.5px;text-align:center;background:#646d77;color:#e2e6ea;border-radius:2px">Unstage<svg class="cur" style="left:55px;top:15px" viewBox="0 0 12 19"><path d="M0.5 0.5 L0.5 16 L4 12.6 L6.6 18.4 L8.8 17.4 L6.3 11.8 L11 11.8 Z" fill="#fff" stroke="#000" stroke-width="1"/></svg></div><div class="clip" style="left:982px;top:2895px;width:110px;height:28px;line-height:29.5px;text-align:center;background:#7f93a5;color:#e2e6ea;border-radius:2px">Stage<svg class="cur" style="left:55px;top:15px" viewBox="0 0 12 19"><path d="M0.5 0.5 L0.5 16 L4 12.6 L6.6 18.4 L8.8 17.4 L6.3 11.8 L11 11.8 Z" fill="#fff" stroke="#000" stroke-width="1"/></svg></div><div class="clip" style="left:872px;top:2923px;width:110px;height:28px;line-height:29.5px;text-align:center;background:#71879e;color:#e2e6ea;border-radius:2px">Stage<svg class="cur" style="left:55px;top:15px" viewBox="0 0 12 19"><path d="M0.5 0.5 L0.5 16 L4 12.6 L6.6 18.4 L8.8 17.4 L6.3 11.8 L11 11.8 Z" fill="#fff" stroke="#000" stroke-width="1"/></svg></div><div class="clip" style="left:982px;top:2923px;width:110px;height:28px;line-height:29.5px;text-align:center;background:#6b8098;color:#e2e6ea;border-radius:2px">Stage<svg class="cur" style="left:55px;top:15px" viewBox="0 0 12 19"><path d="M0.5 0.5 L0.5 16 L4 12.6 L6.6 18.4 L8.8 17.4 L6.3 11.8 L11 11.8 Z" fill="#fff" stroke="#000" stroke-width="1"/></svg></div><div class="clip" style="left:872px;top:2951px;width:110px;height:28px;line-height:29.5px;text-align:center;background:#687d95;color:#e2e6ea;border-radius:2px">Stage<svg class="cur" style="left:55px;top:15px" viewBox="0 0 12 19"><path d="M0.5 0.5 L0.5 16 L4 12.6 L6.6 18.4 L8.8 17.4 L6.3 11.8 L11 11.8 Z" fill="#fff" stroke="#000" stroke-width="1"/></svg></div><div class="clip" style="left:982px;top:2951px;width:110px;height:28px;line-height:29.5px;text-align:center;background:#74b470;color:#e2e6ea;border-radius:2px">Save<svg class="cur" style="left:55px;top:15px" viewBox="0 0 12 19"><path d="M0.5 0.5 L0.5 16 L4 12.6 L6.6 18.4 L8.8 17.4 L6.3 11.8 L11 11.8 Z" fill="#fff" stroke="#000" stroke-width="1"/></svg></div><div class="clip" style="left:872px;top:2979px;width:110px;height:28px;line-height:29.5px;text-align:center;background:#61995d;color:#e2e6ea;border-radius:2px">Save<svg class="cur" style="left:55px;top:15px" viewBox="0 0 12 19"><path d="M0.5 0.5 L0.5 16 L4 12.6 L6.6 18.4 L8.8 17.4 L6.3 11.8 L11 11.8 Z" fill="#fff" stroke="#000" stroke-width="1"/></svg></div><div class="clip" style="left:982px;top:2979px;width:110px;height:28px;line-height:29.5px;text-align:center;background:#61995d;color:#e2e6ea;border-radius:2px">Save<svg class="cur" style="left:55px;top:15px" viewBox="0 0 12 19"><path d="M0.5 0.5 L0.5 16 L4 12.6 L6.6 18.4 L8.8 17.4 L6.3 11.8 L11 11.8 Z" fill="#fff" stroke="#000" stroke-width="1"/></svg></div><div class="clip" style="left:872px;top:3007px;width:110px;height:28px;line-height:29.5px;text-align:center;background:#5b8f58;color:#e2e6ea;border-radius:2px">Save<svg class="cur" style="left:55px;top:15px" viewBox="0 0 12 19"><path d="M0.5 0.5 L0.5 16 L4 12.6 L6.6 18.4 L8.8 17.4 L6.3 11.8 L11 11.8 Z" fill="#fff" stroke="#000" stroke-width="1"/></svg></div><div class="clip" style="left:982px;top:3007px;width:110px;height:28px;line-height:29.5px;text-align:center;background:#527f51;color:#e2e6ea;border-radius:2px">Save<svg class="cur" style="left:55px;top:15px" viewBox="0 0 12 19"><path d="M0.5 0.5 L0.5 16 L4 12.6 L6.6 18.4 L8.8 17.4 L6.3 11.8 L11 11.8 Z" fill="#fff" stroke="#000" stroke-width="1"/></svg></div><div class="clip" style="left:872px;top:3035px;width:110px;height:28px;line-height:29.5px;text-align:center;background:#4f7b4e;color:#e2e6ea;border-radius:2px">Save</div><div class="clip" style="left:982px;top:3035px;width:110px;height:28px;line-height:29.5px;text-align:center;background:#8094a6;color:#e2e6ea;border-radius:2px">Resolve<svg class="cur" style="left:55px;top:15px" viewBox="0 0 12 19"><path d="M0.5 0.5 L0.5 16 L4 12.6 L6.6 18.4 L8.8 17.4 L6.3 11.8 L11 11.8 Z" fill="#fff" stroke="#000" stroke-width="1"/></svg></div><div class="clip" style="left:872px;top:3063px;width:110px;height:28px;line-height:29.5px;text-align:center;background:#71879e;color:#e2e6ea;border-radius:2px">Resolve<svg class="cur" style="left:55px;top:15px" viewBox="0 0 12 19"><path d="M0.5 0.5 L0.5 16 L4 12.6 L6.6 18.4 L8.8 17.4 L6.3 11.8 L11 11.8 Z" fill="#fff" stroke="#000" stroke-width="1"/></svg></div><div class="clip" style="left:982px;top:3063px;width:110px;height:28px;line-height:29.5px;text-align:center;background:#6b8098;color:#e2e6ea;border-radius:2px">Resolve<svg class="cur" style="left:55px;top:15px" viewBox="0 0 12 19"><path d="M0.5 0.5 L0.5 16 L4 12.6 L6.6 18.4 L8.8 17.4 L6.3 11.8 L11 11.8 Z" fill="#fff" stroke="#000" stroke-width="1"/></svg></div><div class="clip" style="left:872px;top:3091px;width:110px;height:28px;line-height:29.5px;text-align:center;background:#677c94;color:#e2e6ea;border-radius:2px">Resolve<svg class="cur" style="left:55px;top:15px" viewBox="0 0 12 19"><path d="M0.5 0.5 L0.5 16 L4 12.6 L6.6 18.4 L8.8 17.4 L6.3 11.8 L11 11.8 Z" fill="#fff" stroke="#000" stroke-width="1"/></svg></div><div class="a" style="left:981px;top:3090px;width:184px;height:13px;line-height:13px;background:#2c2f34;color:#e6e8ea;white-space:nowrap">README.md - all conflicts resolved</div><div class="a" style="left:981px;top:3103px;width:169px;height:13px;line-height:13px;background:#232529;color:#e6e8ea;white-space:nowrap;overflow:hidden">README.md - 1 conflict remaini</div><div class="a" style="left:1096px;top:2755px;width:104px;height:133px;background:#000;"></div><div class="a" style="left:1096px;top:2755px;width:64px;height:53px;background:#1c1e22;"></div><div class="a" style="left:1130px;top:2782px;width:25px;height:26px;background:#24272c;"></div><div class="a" style="left:1160px;top:2755px;width:16px;height:27px;background:#2c2f35;"></div><svg class="a" style="left:1164px;top:2765px" width="7" height="5" viewBox="0 0 7 5"><path d="M0 0H7L3.5 5Z" fill="#c3c7cc"/></svg><div class="a" style="left:1178px;top:2755px;width:12px;height:27px;background:#2c2f35;"></div><svg class="a" style="left:1180px;top:2765px" width="7" height="5" viewBox="0 0 7 5"><path d="M0 0H7L3.5 5Z" fill="#c3c7cc"/></svg><div class="a" style="left:1192px;top:2755px;width:8px;height:27px;background:#353b45;"></div><svg class="a" style="left:1193px;top:2766px" width="7" height="5" viewBox="0 0 7 5"><path d="M0 0H7L3.5 5Z" fill="#8b929b"/></svg><div class="a" style="left:1155px;top:2782px;width:45px;height:12px;background:#5e6652;"></div><div class="a" style="left:1155px;top:2794px;width:45px;height:14px;background:#353b45;"></div><div class="a mono" style="left:1155px;top:2793px;line-height:16px;width:45px;overflow:hidden"><span class="t">[</span><b>lation</b></div><div class="a" style="left:1155px;top:2808px;width:14px;height:24px;background:#3a4552;"></div><svg class="a" style="left:1156px;top:2810px" width="7" height="9" viewBox="0 0 7 9"><path d="M7 0V9L0 4.5Z" fill="#c5cad0"/></svg><div class="a" style="left:1169px;top:2808px;width:31px;height:24px;background:#5e6652;"></div><div class="a mono" style="left:1170px;top:2806px;line-height:16px;width:30px;overflow:hidden"> <span class="o">-</span> <span class="t">[</span><b>M</b></div><div class="a" style="left:1096px;top:2808px;width:44px;height:24px;background:#5e6652;"></div><div class="a" style="left:1140px;top:2808px;width:12px;height:22px;background:#42576f;"></div><svg class="cur" style="left:1140px;top:2810px" viewBox="0 0 12 19"><path d="M0.5 0.5 L0.5 16 L4 12.6 L6.6 18.4 L8.8 17.4 L6.3 11.8 L11 11.8 Z" fill="#fff" stroke="#000" stroke-width="1"/></svg><svg class="cur" style="left:1186px;top:2770px" viewBox="0 0 12 19"><path d="M0.5 0.5 L0.5 16 L4 12.6 L6.6 18.4 L8.8 17.4 L6.3 11.8 L11 11.8 Z" fill="#fff" stroke="#000" stroke-width="1"/></svg><div class="a" style="left:1096px;top:2832px;width:89px;height:14px;background:#2f3238;"></div><div class="a" style="left:1107px;top:2831px;line-height:15px;color:#e6e8ea">README.md</div><div class="a" style="left:1096px;top:2846px;width:64px;height:13px;background:#3e454e;"></div><div class="a" style="left:1096px;top:2844px;line-height:15px;color:#e6e8ea;white-space:nowrap">1 staged file</div><div class="a" style="left:1160px;top:2846px;width:16px;height:22px;background:#2c2f35;"></div><svg class="a" style="left:1164px;top:2857px" width="7" height="5" viewBox="0 0 7 5"><path d="M0 0H7L3.5 5Z" fill="#c3c7cc"/></svg><svg class="cur" style="left:1171px;top:2861px" viewBox="0 0 12 19"><path d="M0.5 0.5 L0.5 16 L4 12.6 L6.6 18.4 L8.8 17.4 L6.3 11.8 L11 11.8 Z" fill="#fff" stroke="#000" stroke-width="1"/></svg><div class="a" style="left:1185px;top:2832px;width:15px;height:20px;background:#2c2f35;"></div><svg class="a" style="left:1188px;top:2843px" width="7" height="5" viewBox="0 0 7 5"><path d="M0 0H7L3.5 5Z" fill="#c3c7cc"/></svg><svg class="cur" style="left:1194px;top:2848px" viewBox="0 0 12 19"><path d="M0.5 0.5 L0.5 16 L4 12.6 L6.6 18.4 L8.8 17.4 L6.3 11.8 L11 11.8 Z" fill="#fff" stroke="#000" stroke-width="1"/></svg><div class="a" style="left:1177px;top:2859px;width:9px;height:9px;border-radius:5px;background:#6b7684"></div><div class="a" style="left:1188px;top:2859px;width:10px;height:10px;border-radius:5px;background:#5fa1de"></div><div class="a" style="left:1096px;top:2859px;width:64px;height:8px;background:#353b45;"></div><div class="a" style="left:1096px;top:2866px;width:18px;height:22px;background:#4a5a6b;"></div><svg class="a" style="left:1104px;top:2866px" width="10" height="22" viewBox="0 0 10 22"><path d="M5 1L9 6H6.2V16H9L5 21L1 16H3.8V6H1Z" fill="#fff" stroke="#000" stroke-width=".8"/></svg><div class="a" style="left:1114px;top:2866px;width:40px;height:10px;background:#2f3238;"></div><div class="a" style="left:1114px;top:2862px;line-height:15px;color:#e6e8ea">ng</div><svg class="a" style="left:1128px;top:2866px" width="8" height="9" viewBox="0 0 8 9"><path d="M8 0V9L0 4.5Z" fill="#c5d0d4"/></svg><svg class="a" style="left:1137px;top:2866px" width="8" height="9" viewBox="0 0 8 9"><path d="M8 0V9L0 4.5Z" fill="#c5d0d4"/></svg><svg class="a" style="left:1146px;top:2866px" width="8" height="9" viewBox="0 0 8 9"><path d="M8 0V9L0 4.5Z" fill="#c5d0d4"/></svg><div class="clip mono" style="left:0;top:3288px;width:818px;height:158px;background:#353b45"><div class="a" style="left:22px;top:0px;width:796px;height:61px;background:#46666b;"></div><div class="num" style="left:-10px;width:23px;top:-3px">6</div><div class="code" style="left:22.7px;top:-3px"> <span class="o">-</span> <span class="t">[</span><span class="w">Pull Requests</span><span class="t">](</span><span class="bl">#pull-requests</span><span class="t">)</span></div><div class="num" style="left:-10px;width:23px;top:13px">7</div><div class="code" style="left:22.7px;top:13px"> <span class="o">-</span> <span class="t">[</span><span class="w">Missing Packages</span><span class="t">](</span><span class="bl">#missing-packages</span><span class="t">)</span></div><div class="num" style="left:-10px;width:23px;top:29px">8</div><div class="num" style="left:-10px;width:23px;top:45px">9</div><div class="code" style="left:22.7px;top:45px"><span class="r" style="font-weight:bold">##</span> <b>Installation</b></div><div class="num" style="left:-10px;width:23px;top:61px">10</div><div class="num" style="left:-10px;width:23px;top:77px">11</div><div class="code" style="left:22.7px;top:77px">If you want to make changes to these packages and test them locally, fork this repository and then symlink the changes</div><div class="num" style="left:-10px;width:23px;top:93px">12</div><div class="a" style="right:0;top:0;width:10px;height:158px;background:linear-gradient(to right,rgba(53,59,69,0),rgba(53,59,69,.85))"></div></div><div class="dot" style="left:372px;top:3416px"></div><div class="dot" style="left:384px;top:3416px"></div><div class="dot" style="left:396px;top:3416px"></div><div class="clip mono" style="left:0;top:3446px;width:1185px;height:66px;background:#353b45"><div class="clip" style="left:0px;top:0;width:395px;height:66px"><div class="a" style="left:0px;top:14px;width:395px;height:16px;background:#3b4d52;"></div><div class="a" style="left:68px;top:14px;width:38px;height:16px;background:#4a686d;"></div><svg class="a" style="left:33px;top:18px" width="7" height="9" viewBox="0 0 7 9"><path d="M0 0V9L7 4.5Z" fill="#c3c8ce"/></svg><div class="num" style="left:0;width:29px;top:-2px">4</div><div class="num" style="left:0;width:29px;top:14px">5</div><div class="code" style="left:47px;top:14px"><span class="r" style="font-weight:bold">##</span> <b>Setup</b></div><div class="num" style="left:0;width:29px;top:30px">6</div><div class="num" style="left:0;width:29px;top:46px">7</div><div class="code" style="left:47px;top:46px">If you want to make changes to these packages and test them locally, fork this repository and then symlink the changes</div></div><div class="clip" style="left:395px;top:0;width:395px;height:66px"><div class="num" style="left:0;width:29px;top:-2px">4</div><div class="num" style="left:0;width:29px;top:14px">5</div><div class="code" style="left:47px;top:14px"> <span class="o">-</span> <span class="t">[</span><span class="w">Installation</span><span class="t">](</span><span class="bl">#installation</span><span class="t">)</span></div><div class="num" style="left:0;width:29px;top:30px">6</div><div class="code" style="left:47px;top:30px"> <span class="o">-</span> <span class="t">[</span><span class="w">Pull Requests</span><span class="t">](</span><span class="bl">#pull-requests</span><span class="t">)</span></div><div class="num" style="left:0;width:29px;top:46px">7</div><div class="code" style="left:47px;top:46px"> <span class="o">-</span> <span class="t">[</span><span class="w">Missing Packages</span><span class="t">](</span><span class="bl">#missing-packages</span><span class="t">)</span></div></div><div class="clip" style="left:790px;top:0;width:395px;height:66px"><div class="a" style="left:47px;top:0px;width:348px;height:14px;background:#3c4653;"></div><div class="a" style="left:47px;top:14px;width:348px;height:52px;background:#5e6652;"></div><svg class="a" style="left:33px;top:49px" width="8" height="10" viewBox="0 0 8 10"><path d="M8 0V10L0 5Z" fill="#c9ced4"/></svg><div class="num" style="left:0;width:29px;top:-2px">4</div><div class="num" style="left:0;width:29px;top:14px">5</div><div class="code" style="left:47px;top:14px"> <span class="o">-</span> <span class="t">[</span><span class="w">Installation</span><span class="t">](</span><span class="bl">#installation</span><span class="t">)</span></div><div class="num" style="left:0;width:29px;top:30px">6</div><div class="code" style="left:47px;top:30px"> <span class="o">-</span> <span class="t">[</span><span class="w">Pull Requests</span><span class="t">](</span><span class="bl">#pull-requests</span><span class="t">)</span></div><div class="num" style="left:0;width:29px;top:46px">7</div><div class="code" style="left:47px;top:46px"> <span class="o">-</span> <span class="t">[</span><span class="w">Missing Packages</span><span class="t">](</span><span class="bl">#missing-packages</span><span class="t">)</span></div></div><div class="a" style="left:383px;top:0;width:12px;height:66px;background:linear-gradient(to right,rgba(40,45,53,0),rgba(40,45,53,.55))"></div><div class="a" style="left:778px;top:0;width:12px;height:66px;background:linear-gradient(to right,rgba(40,45,53,0),rgba(40,45,53,.55))"></div><svg class="a" style="left:0;top:0" width="1185" height="66" viewBox="0 0 1185 66"><g stroke="#5d6e74" stroke-width="1" fill="none"><path d="M0 14.5H836"/><path d="M0 30.5H395C410 30.5 404 66 420 70"/></g></svg></div><svg class="cur" style="left:825px;top:3500px" viewBox="0 0 12 19"><path d="M0.5 0.5 L0.5 16 L4 12.6 L6.6 18.4 L8.8 17.4 L6.3 11.8 L11 11.8 Z" fill="#fff" stroke="#000" stroke-width="1"/></svg><div class="a" style="left:0px;top:3512px;width:861px;height:72px;background:#4c6785;"></div><svg class="a" style="left:8px;top:3527px" width="8" height="6" viewBox="0 0 8 6"><path d="M0 0H8L4 6Z" fill="#90a2b6"/></svg><svg class="a" style="left:24px;top:3521px" width="20" height="18" viewBox="0 0 20 18"><rect width="20" height="18" rx="2" fill="#647b95"/><path d="M10.3 3.8V9.6L5.6 13.6" stroke="#e8eaec" stroke-width="1.7" fill="none" stroke-linecap="round" stroke-linejoin="round"/><path d="M10.3 9.6L14.2 12.6" stroke="#e8eaec" stroke-width="1.5" fill="none" stroke-dasharray="1.6 1"/><path d="M7.7 6.2L10.3 3L12.9 6.2Z" fill="#e8eaec"/></svg><div class="a" style="left:49px;top:3522px;line-height:16px;color:#e6e8ea;letter-spacing:-1.1px">README.md</div><div class="bbtn" style="left:633px;top:3516px;width:110px;background:#667c94">Resolve</div><div class="bbtn" style="left:747px;top:3516px;width:110px;background:#667c94">Stage</div><svg class="a" style="left:8px;top:3563px" width="8" height="6" viewBox="0 0 8 6"><path d="M0 0H8L4 6Z" fill="#90a2b6"/></svg><svg class="a" style="left:24px;top:3557px" width="20" height="18" viewBox="0 0 20 18"><rect width="20" height="18" rx="2" fill="#647b95"/><path d="M10.3 3.8V9.6L5.6 13.6" stroke="#e8eaec" stroke-width="1.7" fill="none" stroke-linecap="round" stroke-linejoin="round"/><path d="M10.3 9.6L14.2 12.6" stroke="#e8eaec" stroke-width="1.5" fill="none" stroke-dasharray="1.6 1"/><path d="M7.7 6.2L10.3 3L12.9 6.2Z" fill="#e8eaec"/></svg><div class="a" style="left:49px;top:3558px;line-height:16px;color:#e6e8ea;letter-spacing:-1.1px">README.md</div><div class="bbtn" style="left:633px;top:3552px;width:110px;background:#667c94">Resolve</div><div class="bbtn" style="left:747px;top:3552px;width:110px;background:#667c94">Stage</div><svg class="cur" style="left:803px;top:3531px" viewBox="0 0 12 19"><path d="M0.5 0.5 L0.5 16 L4 12.6 L6.6 18.4 L8.8 17.4 L6.3 11.8 L11 11.8 Z" fill="#fff" stroke="#000" stroke-width="1"/></svg><div class="a" style="left:0px;top:3584px;width:818px;height:32px;background:#353b45;"></div><div class="a" style="left:16px;top:3584px;width:794px;height:16px;background:#5f4b53;"></div><div class="a" style="left:16px;top:3600px;width:794px;height:16px;background:#46666b;"></div><div class="a mono code" style="left:16.6px;top:3584px"><span class="r" style="font-weight:bold">##</span> <b>Setup</b></div><div class="a mono num" style="left:-16px;width:23px;top:3600px">5</div><div class="a mono code" style="left:16.6px;top:3600px"> <span class="o">-</span> <span class="t">[</span><span class="w">Installation</span><span class="t">](</span><span class="bl">#installation</span><span class="t">)</span></div><div class="a" style="left:0px;top:3616px;width:763px;height:23px;background:#353b45;"></div><div class="a" style="left:415px;top:3616px;width:348px;height:6px;background:#5e6652;"></div><div class="a mono code" style="left:20px;top:3621px"><span class="r" style="font-weight:bold">##</span> <b>Installation</b></div><div class="a" style="left:126px;top:3620px;width:2px;height:19px;background:#f9ae58;"></div><div class="a mono num" style="left:367px;width:29px;top:3621px">9</div><div class="a mono code" style="left:415px;top:3621px"><span class="r" style="font-weight:bold">##</span> <b>Installation</b></div><div class="a" style="left:355px;top:3616px;width:12px;height:23px;background:linear-gradient(to right,rgba(40,45,53,0),rgba(40,45,53,.55))"></div><svg class="a" style="left:0;top:3616px" width="367" height="23" viewBox="0 0 367 23"><path d="M0 0.5C6 2 5 21 17 21.5H367" stroke="#505c64" fill="none"/></svg>
</body></html>
